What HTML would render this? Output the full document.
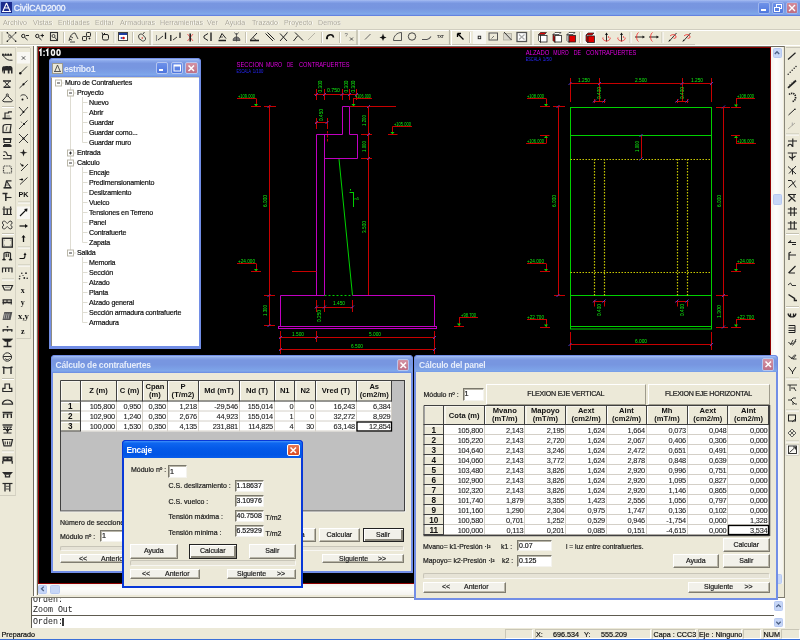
<!DOCTYPE html>
<html><head><meta charset="utf-8"><style>
*{box-sizing:border-box}
html,body{margin:0;padding:0}
body{width:800px;height:640px;overflow:hidden;position:relative;background:#ECE9D8;font-family:"Liberation Sans", sans-serif;-webkit-font-smoothing:antialiased}
div{position:absolute}
.t{white-space:pre}
svg{position:absolute;overflow:visible}
.btn{background:#F2F1EA;border:1px solid;border-color:#FFFFFF #7F7C70 #7F7C70 #FFFFFF;box-shadow:inset -1px -1px 0 #B9B6A8}
.def{border:1px solid #222;box-shadow:inset 1px 1px 0 #fff,inset -2px -2px 0 #8A877B}
.inp{background:#fff;border:1px solid;border-color:#7A786C #F4F3EE #F4F3EE #7A786C;box-shadow:inset 1px 1px 0 #B8B5A8}
.prog{background:#E6E3D6;border:1px solid;border-color:#C8C5B8 #F7F6F2 #F7F6F2 #C8C5B8;border-radius:2px}
</style></head><body>
<div style="left:0;top:0;width:800px;height:640px;overflow:hidden;will-change:transform">

<div style="left:0px;top:0px;width:800px;height:16px;background:linear-gradient(#A8BEF2 0%,#8AA6EA 10%,#7896E0 22%,#7795E0 50%,#7BA0E6 75%,#80A8EA 88%,#6A88E0 100%)"></div>
<div style="left:0px;top:15px;width:800px;height:1px;background:#6382E0"></div>
<svg style="left:1px;top:2px" width="11" height="11" viewBox="0 0 11 11"><rect width="11" height="11" fill="#1B2A8C"/><path d="M5.5 1 L2 9 M5.5 1 L9 9 M3.5 6 H7.5 M1 9.5 H10" stroke="#fff" stroke-width="1.1" fill="none"/></svg>
<div class="t" style="left:13.8px;top:3.3000000000000007px;height:10px;line-height:10px;font-size:8.6px;color:#EEF2FC;font-weight:normal;letter-spacing:-0.15px;-webkit-text-stroke:0.3px #EEF2FC">CivilCAD2000</div>
<div style="left:758px;top:2px;width:12px;height:12px;border-radius:2px;border:1px solid #9FB6EE;background:linear-gradient(#6F92E8,#4F78DE)"></div>
<div style="left:772px;top:2px;width:12px;height:12px;border-radius:2px;border:1px solid #9FB6EE;background:linear-gradient(#6F92E8,#4F78DE)"></div>
<div style="left:786px;top:2px;width:12px;height:12px;border-radius:2px;border:1px solid #9FB6EE;background:linear-gradient(#D48A9A,#BF6F82)"></div>
<div style="left:761px;top:9px;width:5px;height:2px;background:#fff"></div>
<svg style="left:773px;top:3px" width="10" height="10"><rect x="3.5" y="1.5" width="5" height="4" fill="none" stroke="#fff" stroke-width="1"/><rect x="1.5" y="4.5" width="5" height="4" fill="#5A80E0" stroke="#fff" stroke-width="1"/></svg>
<svg style="left:787px;top:3px" width="10" height="10"><path d="M2 2 L8 8 M8 2 L2 8" stroke="#fff" stroke-width="1.4"/></svg>
<div style="left:0px;top:16px;width:800px;height:13px;background:#ECE9D8"></div>
<div class="t" style="left:3.6px;top:18.2px;height:10px;line-height:10px;font-size:7.2px;color:#FFFFFF;font-weight:normal;">Archivo</div>
<div class="t" style="left:3px;top:17.6px;height:10px;line-height:10px;font-size:7.2px;color:#ACA899;font-weight:normal;">Archivo</div>
<div class="t" style="left:33.6px;top:18.2px;height:10px;line-height:10px;font-size:7.2px;color:#FFFFFF;font-weight:normal;">Vistas</div>
<div class="t" style="left:33px;top:17.6px;height:10px;line-height:10px;font-size:7.2px;color:#ACA899;font-weight:normal;">Vistas</div>
<div class="t" style="left:58.6px;top:18.2px;height:10px;line-height:10px;font-size:7.2px;color:#FFFFFF;font-weight:normal;">Entidades</div>
<div class="t" style="left:58px;top:17.6px;height:10px;line-height:10px;font-size:7.2px;color:#ACA899;font-weight:normal;">Entidades</div>
<div class="t" style="left:95.6px;top:18.2px;height:10px;line-height:10px;font-size:7.2px;color:#FFFFFF;font-weight:normal;">Editar</div>
<div class="t" style="left:95px;top:17.6px;height:10px;line-height:10px;font-size:7.2px;color:#ACA899;font-weight:normal;">Editar</div>
<div class="t" style="left:120.6px;top:18.2px;height:10px;line-height:10px;font-size:7.2px;color:#FFFFFF;font-weight:normal;">Armaduras</div>
<div class="t" style="left:120px;top:17.6px;height:10px;line-height:10px;font-size:7.2px;color:#ACA899;font-weight:normal;">Armaduras</div>
<div class="t" style="left:160.6px;top:18.2px;height:10px;line-height:10px;font-size:7.2px;color:#FFFFFF;font-weight:normal;">Herramientas</div>
<div class="t" style="left:160px;top:17.6px;height:10px;line-height:10px;font-size:7.2px;color:#ACA899;font-weight:normal;">Herramientas</div>
<div class="t" style="left:207.6px;top:18.2px;height:10px;line-height:10px;font-size:7.2px;color:#FFFFFF;font-weight:normal;">Ver</div>
<div class="t" style="left:207px;top:17.6px;height:10px;line-height:10px;font-size:7.2px;color:#ACA899;font-weight:normal;">Ver</div>
<div class="t" style="left:225.6px;top:18.2px;height:10px;line-height:10px;font-size:7.2px;color:#FFFFFF;font-weight:normal;">Ayuda</div>
<div class="t" style="left:225px;top:17.6px;height:10px;line-height:10px;font-size:7.2px;color:#ACA899;font-weight:normal;">Ayuda</div>
<div class="t" style="left:252.6px;top:18.2px;height:10px;line-height:10px;font-size:7.2px;color:#FFFFFF;font-weight:normal;">Trazado</div>
<div class="t" style="left:252px;top:17.6px;height:10px;line-height:10px;font-size:7.2px;color:#ACA899;font-weight:normal;">Trazado</div>
<div class="t" style="left:284.6px;top:18.2px;height:10px;line-height:10px;font-size:7.2px;color:#FFFFFF;font-weight:normal;">Proyecto</div>
<div class="t" style="left:284px;top:17.6px;height:10px;line-height:10px;font-size:7.2px;color:#ACA899;font-weight:normal;">Proyecto</div>
<div class="t" style="left:318.6px;top:18.2px;height:10px;line-height:10px;font-size:7.2px;color:#FFFFFF;font-weight:normal;">Demos</div>
<div class="t" style="left:318px;top:17.6px;height:10px;line-height:10px;font-size:7.2px;color:#ACA899;font-weight:normal;">Demos</div>
<div style="left:0px;top:29px;width:800px;height:1px;background:#D0CDBF"></div>
<div style="left:0px;top:30px;width:800px;height:1px;background:#FFFFFF"></div>
<div style="left:0px;top:31px;width:695px;height:14px;background:#ECE9D8"></div>
<div style="left:0px;top:44px;width:695px;height:1px;background:#C9C6B8"></div>
<div style="left:0px;top:45px;width:800px;height:1px;background:#FFFFFF"></div>
<svg style="left:0;top:0" width="800" height="50"><path d="M2 32 V44" stroke="#B8B5A6" stroke-width="1"/><path d="M63.5 32 V43" stroke="#C5C2B2" stroke-width="1"/><path d="M64.5 32 V43" stroke="#FFF" stroke-width="1"/><path d="M95.5 32 V43" stroke="#C5C2B2" stroke-width="1"/><path d="M96.5 32 V43" stroke="#FFF" stroke-width="1"/><path d="M114 32 V43" stroke="#C5C2B2" stroke-width="1"/><path d="M115 32 V43" stroke="#FFF" stroke-width="1"/><path d="M132.5 32 V43" stroke="#C5C2B2" stroke-width="1"/><path d="M133.5 32 V43" stroke="#FFF" stroke-width="1"/><path d="M198.5 32 V43" stroke="#C5C2B2" stroke-width="1"/><path d="M199.5 32 V43" stroke="#FFF" stroke-width="1"/><path d="M245.5 32 V43" stroke="#C5C2B2" stroke-width="1"/><path d="M246.5 32 V43" stroke="#FFF" stroke-width="1"/><path d="M321.5 32 V43" stroke="#C5C2B2" stroke-width="1"/><path d="M322.5 32 V43" stroke="#FFF" stroke-width="1"/><path d="M339.5 32 V43" stroke="#C5C2B2" stroke-width="1"/><path d="M340.5 32 V43" stroke="#FFF" stroke-width="1"/><path d="M469.5 32 V43" stroke="#C5C2B2" stroke-width="1"/><path d="M470.5 32 V43" stroke="#FFF" stroke-width="1"/><path d="M579.5 32 V43" stroke="#C5C2B2" stroke-width="1"/><path d="M580.5 32 V43" stroke="#FFF" stroke-width="1"/><path d="M630 32 V43" stroke="#C5C2B2" stroke-width="1"/><path d="M631 32 V43" stroke="#FFF" stroke-width="1"/><path d="M662 32 V43" stroke="#C5C2B2" stroke-width="1"/><path d="M663 32 V43" stroke="#FFF" stroke-width="1"/><path d="M150 30 V45" stroke="#B8B5A6" stroke-width="1.2"/><path d="M152 30 V45" stroke="#FFF" stroke-width="1"/><path d="M357 30 V45" stroke="#B8B5A6" stroke-width="1.2"/><path d="M359 30 V45" stroke="#FFF" stroke-width="1"/><path d="M449.5 30 V45" stroke="#B8B5A6" stroke-width="1.2"/><path d="M451.5 30 V45" stroke="#FFF" stroke-width="1"/><path d="M531 30 V45" stroke="#B8B5A6" stroke-width="1.2"/><path d="M533 30 V45" stroke="#FFF" stroke-width="1"/><g stroke="#333" stroke-width="0.75" fill="#111"><path d="M7.5 33 L15.5 41 M15.5 33 L7.5 41" fill="none"/><circle cx="7.3" cy="32.8" r="0.8" stroke="none"/><circle cx="15.7" cy="32.8" r="0.8" stroke="none"/><circle cx="7.3" cy="41.2" r="0.8" stroke="none"/><circle cx="15.7" cy="41.2" r="0.8" stroke="none"/><circle cx="9.8" cy="36.3" r="1.3" fill="none" stroke="#555"/></g><g stroke="#222" stroke-width="1" fill="none"><circle cx="23.3" cy="36" r="1.7"/><path d="M24.6 37.3 L27.5 40 M26 35.5 H29"/></g><g stroke="#222" stroke-width="1" fill="none"><circle cx="37.3" cy="36" r="1.7"/><path d="M38.6 37.3 L41.5 40 M40.5 35.5 H44 M42.3 33.8 V37.3"/></g><g stroke="#333" fill="none"><rect x="50.5" y="32.5" width="7" height="8" stroke-width="1.1"/><circle cx="53.5" cy="36" r="1.5" stroke-width="0.9"/><path d="M54.5 37 L57 40" stroke-width="0.9"/></g><g stroke="#333" stroke-width="0.9" fill="none"><path d="M69 41 C70 36 72 33 75 33 L78 39"/><path d="M70 36 L73 38 M69 39 L72 40 M70 42 H75"/></g><g stroke="#222" stroke-width="1" fill="none"><rect x="82.5" y="36.5" width="4" height="4" rx="0.8"/><rect x="86.5" y="32.5" width="4" height="4" rx="0.8"/><circle cx="89.5" cy="38.5" r="0.5" fill="#000"/></g><g stroke="#222" stroke-width="1" fill="none"><rect x="102.5" y="34.5" width="6" height="5.5" rx="1.5"/><path d="M102 32.5 L103 35 L105 33"/></g><rect x="118.5" y="32.5" width="9" height="8" fill="#fff" stroke="#444" stroke-width="1"/><rect x="119" y="33" width="8" height="2" fill="#1E3C9E"/><circle cx="123.5" cy="38" r="1.3" fill="#D01010"/><circle cx="121.5" cy="38" r="1" fill="#3050C0"/><g stroke="#333" stroke-width="0.9" fill="none"><path d="M138.5 36 C139 34 141 33.5 142.5 34.5 L145.5 38 C146 40 144 41.5 142.5 41 L139 38.5 Z"/><path d="M143 34 L144.5 32"/></g><circle cx="142.3" cy="38" r="0.8" fill="#D03030"/><g stroke="#222" fill="none"><path d="M156.5 35 V41" stroke="#888" stroke-width="1.1"/><path d="M158 40 L163 36" stroke-width="0.9"/><path d="M165.5 32.5 V39" stroke-width="1.3"/></g><g stroke="#222" fill="none"><path d="M170.8 35 V41" stroke-width="1.3"/><path d="M173 40 L177 37" stroke-width="0.9"/><path d="M180 32.5 V38" stroke-width="1.3"/></g><path d="M187.5 34 L193 41 M193 34 L187.5 41" stroke="#F04040" stroke-width="0.8"/><path d="M190.2 33.5 V41.5" stroke="#222" stroke-width="1.6"/><g stroke="#222" fill="none"><path d="M211 32.5 V41" stroke-width="1.4"/><path d="M208 33.5 L204 36 V38 L208 40.5" stroke-width="1"/></g><g stroke="#222" fill="none"><path d="M218.5 40.5 H226" stroke-width="1.5"/><path d="M219.5 38.5 L222 33.5 L226 38.5" stroke-width="1"/><path d="M220 37 H223" stroke-width="0.7"/></g><g stroke="#444" fill="#777" stroke-width="0.8"><path d="M233 40.5 C233 38 235 37 236.5 37 C238 37 240 38 240 40.5 Z"/><path d="M236.5 33 V41.5 M234.5 32.5 L236.5 35 L238.5 32.5" fill="none"/></g><g stroke="#222" fill="none"><path d="M250 40.5 H259" stroke-width="1.6"/><path d="M250.5 40 L257 33" stroke-width="1"/><path d="M253 37.5 L256 40" stroke-width="0.7"/></g><path d="M265.5 33.5 L273 41 M267.5 32.5 L274.5 39.5" stroke="#222" stroke-width="1"/><path d="M280 33.5 L287 41 M287.5 32.5 L280 41" stroke="#222" stroke-width="1"/><path d="M286 33 L288 32" stroke="#999" stroke-width="0.6"/><path d="M295 32.5 L303 40.5 M297.5 36 L293.5 41" stroke="#222" stroke-width="1"/><path d="M308 40 L315 33" stroke="#B0ADA0" stroke-width="0.9"/><path d="M326.8 38.5 C327 34 333 33.5 333.5 37.5" stroke="#111" stroke-width="1.6" fill="none"/><circle cx="327" cy="38.3" r="1.1" fill="#111"/><text x="344.5" y="37" font-size="6" font-family="Liberation Sans" fill="#666">?</text><path d="M350 37.5 L353 40.5 M353 37.5 L350 40.5" stroke="#444" stroke-width="0.9"/><path d="M365 39.5 L370.5 34" stroke="#555" stroke-width="0.9"/><path d="M383 33.5 L384 36.5 L386.5 37.5 L384 38.5 L383 41 L382 38.5 L379.5 37.5 L382 36.5 Z" fill="#111"/><path d="M393.5 40.5 H401.5 V32.5 C397 32.5 393.5 36 393.5 40.5 Z" stroke="#444" stroke-width="0.9" fill="none"/><circle cx="412" cy="36.5" r="3.7" stroke="#333" stroke-width="0.9" fill="none"/><path d="M422 39.5 H427 C429 39.5 430 38 431 36.5" stroke="#555" stroke-width="1.1" fill="none"/><text x="437" y="38" font-size="4" font-weight="bold" font-family="Liberation Sans" fill="#333" textLength="7">TXT</text><path d="M457.5 33.5 L463.5 39.5 M457.5 33.5 V37 M457.5 33.5 H461" stroke="#000" stroke-width="1.3" fill="none"/><rect x="473" y="31" width="13" height="13" fill="#F6F5F0"/><rect x="478.2" y="36.2" width="2.5" height="2.5" fill="none" stroke="#222" stroke-width="0.9"/><rect x="489" y="33" width="8.5" height="7" fill="none" stroke="#555" stroke-width="1"/><path d="M491.5 38.5 L494 36" stroke="#555" stroke-width="0.8"/><rect x="503.5" y="33.5" width="8" height="6.5" fill="#D8D6CC" stroke="#B0ADA0" stroke-width="0.8"/><path d="M504 32 L511.5 40" stroke="#222" stroke-width="0.9"/><rect x="517" y="32.5" width="9.5" height="9" fill="#fff" stroke="#555" stroke-width="1.3"/><path d="M519 34.5 L524.5 39.5 M524.5 34.5 L519 39.5" stroke="#aaa" stroke-width="1.2"/><path d="M538.5 34.5 L540.5 32.5 H546.5 L544.5 34.5 Z" fill="#E00000" stroke="#222" stroke-width="0.7"/><path d="M538.5 34.5 V40.5 L540.5 42.5 V36.5 Z" fill="#FFFFFF" stroke="#222" stroke-width="0.7"/><rect x="540.5" y="35.5" width="6.5" height="6.5" fill="#FFFFFF" stroke="#222" stroke-width="0.8"/><path d="M553 34.5 L555 32.5 H561 L559 34.5 Z" fill="#FFFFFF" stroke="#222" stroke-width="0.7"/><path d="M553 34.5 V40.5 L555 42.5 V36.5 Z" fill="#E00000" stroke="#222" stroke-width="0.7"/><rect x="555" y="35.5" width="6.5" height="6.5" fill="#FFFFFF" stroke="#222" stroke-width="0.8"/><path d="M567 34.5 L569 32.5 H575 L573 34.5 Z" fill="#FFFFFF" stroke="#222" stroke-width="0.7"/><path d="M567 34.5 V40.5 L569 42.5 V36.5 Z" fill="#FFFFFF" stroke="#222" stroke-width="0.7"/><rect x="569" y="35.5" width="6.5" height="6.5" fill="#E00000" stroke="#222" stroke-width="0.8"/><rect x="583" y="31" width="13" height="13" fill="#F6F5F0"/><path d="M586 35 L588 33 H594 L592 35 Z" fill="#E00000" stroke="#222" stroke-width="0.7"/><path d="M586 35 V41 L588 43 V37 Z" fill="#E00000" stroke="#222" stroke-width="0.7"/><rect x="588" y="36" width="6.5" height="6.5" fill="#E00000" stroke="#222" stroke-width="0.8"/><path d="M606.5 41.5 V33.5" stroke="#111" stroke-width="0.9"/><path d="M605 35 L606.5 32.5 L608 35 Z" fill="#111"/><path d="M603 37.5 C602 39.5 605 41 606.5 41 C608 41 611 39.5 610 37.5" stroke="#F03030" stroke-width="0.9" fill="none"/><circle cx="608.5" cy="37" r="0.7" fill="#F03030"/><path d="M621.5 41.5 V33.5" stroke="#111" stroke-width="0.9"/><path d="M620 35 L621.5 32.5 L623 35 Z" fill="#111"/><path d="M618 37.5 C617 39.5 620 41 621.5 41 C623 41 626 39.5 625 37.5" stroke="#F03030" stroke-width="0.9" fill="none"/><circle cx="623.5" cy="37" r="0.7" fill="#F03030"/><path d="M635 37 H643" stroke="#111" stroke-width="0.9"/><path d="M642.5 35.5 L645 37 L642.5 38.5 Z" fill="#111"/><path d="M638.5 32.5 C636 34 636 40 638.5 41.5" stroke="#F03030" stroke-width="0.9" fill="none"/><path d="M649 37 H657" stroke="#111" stroke-width="0.9"/><path d="M656.5 35.5 L659 37 L656.5 38.5 Z" fill="#111"/><path d="M652.5 32.5 C650 34 650 40 652.5 41.5" stroke="#F03030" stroke-width="0.9" fill="none"/><path d="M669 41.5 L676.5 33" stroke="#222" stroke-width="0.9"/><path d="M668.5 41.5 L670.5 40.5 L669.5 39.5 Z" fill="#111"/><path d="M670 36 C672 34 676 34 676 37 C676 38.5 674 38.5 673.5 38" stroke="#F03030" stroke-width="0.9" fill="none"/><path d="M683 41.5 L690.5 33" stroke="#222" stroke-width="0.9"/><path d="M682.5 41.5 L684.5 40.5 L683.5 39.5 Z" fill="#111"/><path d="M684 36 C686 34 690 34 690 37 C690 38.5 688 38.5 687.5 38" stroke="#F03030" stroke-width="0.9" fill="none"/></svg>
<svg style="left:0;top:0" width="36" height="500"><path d="M0 47.5 H15" stroke="#C9C6B8"/><path d="M17 47.5 H30" stroke="#C9C6B8"/><path d="M15.5 47 V496" stroke="#D6D3C4" stroke-width="1"/><path d="M0 495.5 H15.5" stroke="#D0CDBE"/><path d="M30.5 48 V339" stroke="#D6D3C4"/><path d="M16.5 338.5 H30.5" stroke="#D0CDBE"/><path d="M2 106.5 H14" stroke="#C5C2B2"/><path d="M2 107.5 H14" stroke="#FFF"/><path d="M2 233.5 H14" stroke="#C5C2B2"/><path d="M2 234.5 H14" stroke="#FFF"/><path d="M2 279 H14" stroke="#C5C2B2"/><path d="M2 280 H14" stroke="#FFF"/><path d="M2 378.5 H14" stroke="#C5C2B2"/><path d="M2 379.5 H14" stroke="#FFF"/><path d="M2 451 H14" stroke="#C5C2B2"/><path d="M2 452 H14" stroke="#FFF"/><path d="M18 202 H30" stroke="#C5C2B2"/><path d="M18 203 H30" stroke="#FFF"/><path d="M18 247 H30" stroke="#C5C2B2"/><path d="M18 248 H30" stroke="#FFF"/><path d="M18 265 H30" stroke="#C5C2B2"/><path d="M18 266 H30" stroke="#FFF"/><g fill="#222"><circle cx="3" cy="54.6" r="1"/><circle cx="5.6" cy="54.6" r="1"/><circle cx="8.2" cy="54.6" r="1"/><circle cx="10.8" cy="54.6" r="1"/></g><path d="M2 55.2 H12 M3 55.5 C5 58 7 60 9.5 60.2 H12.5" stroke="#2A2A2A" fill="none" stroke-width="1"/><path d="M2 73.5 V68.5 C2 66.5 3.5 66 5 66.3 C6 65.8 7.5 65.8 8.5 66.3 C9.5 65.8 12.5 66 12.5 68.5 V73.5 H11 V70.5 H9.5 V73.5 H7.8 V70.5 H5 V73.5 H3.5 V70.5 H3 Z" fill="#2A2A2A"/><path d="M3 81 H11 M3.5 87.3 H10.5" stroke="#2A2A2A" fill="none" stroke-width="1.6"/><path d="M4.5 81.5 L7 84.5 L9.5 81.5 M4.5 87 L7 84 L9.5 87" stroke="#2A2A2A" fill="none" stroke-width="1"/><circle cx="7.3" cy="95" r="1.1" stroke="#2A2A2A" fill="none" stroke-width="0.9"/><path d="M6.5 96 L2.5 100.8 L4 101.8 H11.5 L12.5 100.8 L8 96" stroke="#2A2A2A" fill="none" stroke-width="1"/><path d="M2.5 118.5 H11.5" stroke="#2A2A2A" fill="none" stroke-width="1.6"/><path d="M5 118 V113 H8.5 V111.5 M8.5 111.8 H12" stroke="#2A2A2A" fill="none" stroke-width="1.2"/><path d="M6.5 116 H10" stroke="#777" stroke-width="0.8"/><path d="M3 132.5 V127 C3 125 4 124.5 6 124.5 H11 L10 132.5" stroke="#2A2A2A" fill="none" stroke-width="1.2"/><path d="M2.5 132.5 H11.5" stroke="#2A2A2A" fill="none" stroke-width="1.3"/><path d="M7 126.5 L6 131" stroke="#555" stroke-width="0.9"/><path d="M3 139 H11.5 M3 146 H11.5" stroke="#2A2A2A" fill="none" stroke-width="1.8"/><path d="M4 140 V142.5 H10.5 V140 M4 144.5 H10.5" stroke="#2A2A2A" fill="none" stroke-width="1.2"/><path d="M3.5 152 C5 151.5 6.5 152 7 154 L7.5 155.5 H11 V158.5 M3 158.8 H11.5 M3 155.5 L5 155.5" stroke="#2A2A2A" fill="none" stroke-width="1.1"/><path d="M4 166 H10 L11.5 167.5 V172.5 M3.5 166.5 V173 H11.5" stroke="#3A3A3A" fill="none" stroke-width="1.2" stroke-dasharray="1 0.7"/><path d="M3.5 187.8 H11.5" stroke="#2A2A2A" fill="none" stroke-width="1.6"/><path d="M5 187 L6.5 180.8 H11.5 M6.5 181 L10.5 187" stroke="#2A2A2A" fill="none" stroke-width="1.2"/><path d="M6 185 H9" stroke="#666" stroke-width="0.9"/><path d="M2.5 193.5 H7.5 M5.8 193.5 V201" stroke="#2A2A2A" fill="none" stroke-width="1.5"/><path d="M5.8 197.5 H11.5" stroke="#2A2A2A" fill="none" stroke-width="1.1"/><path d="M2.5 209 H12 M3 214.5 H12" stroke="#2A2A2A" fill="none" stroke-width="1.2"/><path d="M4 209 V214.5 M7.3 209 V214.5 M10.6 209 V214.5 M4 206.5 V208.5 M10.6 206.5 V208.5" stroke="#2A2A2A" fill="none" stroke-width="1.3"/><path d="M3.5 221 C5 221 6 222 7.3 223.5 C8.5 222 9.5 221 11 221 C12.5 222 12.5 224 10.5 225 C12.5 226 12.5 228 11 229 C9.5 229 8.5 228 7.3 226.5 C6 228 5 229 3.5 229 C2 228 2 226 4 225 C2 224 2 222 3.5 221 Z" stroke="#2A2A2A" fill="none" stroke-width="0.9"/><rect x="2.5" y="238.3" width="9.8" height="8.8" stroke="#2A2A2A" fill="none" stroke-width="1.4"/><g fill="#999"><circle cx="4.4" cy="240.2" r="0.6"/><circle cx="10.4" cy="240.2" r="0.6"/><circle cx="4.4" cy="245.2" r="0.6"/><circle cx="10.4" cy="245.2" r="0.6"/></g><path d="M4 259.5 V253.5 C4 252 10.5 252 10.5 253.5 V259.5 M6.2 253.5 V257 M8.3 253.5 V257" stroke="#2A2A2A" fill="none" stroke-width="1.2"/><path d="M2.5 260 C2.5 258.5 5.5 258.5 5.5 260 Z M9 260 C9 258.5 12 258.5 12 260 Z" fill="#222" stroke="#222" stroke-width="0.8"/><path d="M2.5 272.5 V268 H12 V272.5 M5.6 268 V272 M8.8 268 V272" stroke="#2A2A2A" fill="none" stroke-width="1.2"/><path d="M2.5 285.5 H12.5 L10.5 290 H4.5 Z" stroke="#2A2A2A" fill="none" stroke-width="1.2"/><path d="M5 287.2 H10" stroke="#888" stroke-width="1"/><path d="M2.5 299.8 H12 M2.5 302.5 H12" stroke="#2A2A2A" fill="none" stroke-width="1.3"/><path d="M3.3 300 V304.5 M7 300 V302.5 M11.2 300 V304.5 M5 302.5 V303.5 M9 302.5 V303.5" stroke="#2A2A2A" fill="none" stroke-width="1.1"/><path d="M4.3 312 H12.3 L10.5 320 H2.5 Z" fill="#555"/><path d="M5.2 313.5 L4.1 318.8 M7.2 313.5 L6.1 318.8 M9.2 313.5 L8.1 318.8" stroke="#CCC" stroke-width="0.7"/><circle cx="7.5" cy="326.8" r="0.9" fill="#222"/><path d="M2.5 329.8 H12.5" stroke="#2A2A2A" fill="none" stroke-width="1.4"/><path d="M3.2 330 V331.8 M7.5 330 V331.5 M11.8 330 V331.8" stroke="#2A2A2A" fill="none" stroke-width="1.2"/><path d="M2.5 339 H12.5 L10 341.3 H5 Z" fill="#222" stroke="#222" stroke-width="0.8"/><path d="M7.5 341 V346 M3.5 346.5 H11.5" stroke="#2A2A2A" fill="none" stroke-width="1.5"/><circle cx="7.3" cy="357" r="4.2" stroke="#2A2A2A" fill="none" stroke-width="1"/><path d="M3.2 356.5 H11.4" stroke="#2A2A2A" fill="none" stroke-width="1"/><path d="M5 358.5 C6 360 8.6 360 9.6 358.5" stroke="#2A2A2A" fill="none" stroke-width="0.9"/><path d="M2.5 367 C5 368 10 368 12.5 367" stroke="#2A2A2A" fill="none" stroke-width="1.5"/><path d="M3.8 367.5 V374 M11 367.5 V374" stroke="#2A2A2A" fill="none" stroke-width="1.3"/><path d="M5 384 H9.5 V388.3 H11.8 V391.5 H2.8 V388.3 H5 Z" stroke="#2A2A2A" fill="none" stroke-width="1.2"/><path d="M2.5 404.2 H12.5 V403 C10.5 399 4.5 399 2.5 403 Z" stroke="#2A2A2A" fill="none" stroke-width="1.2"/><path d="M2.5 412.5 H12.5" stroke="#2A2A2A" fill="none" stroke-width="1.5"/><path d="M3 414 H12" stroke="#2A2A2A" fill="none" stroke-width="0.9"/><path d="M3.6 414 V418 M7.5 414 V418 M11.3 414 V418" stroke="#2A2A2A" fill="none" stroke-width="1.4"/><path d="M2.5 425 H12.5" stroke="#2A2A2A" fill="none" stroke-width="1.4"/><path d="M3 427 H12 M3.5 433 H11.5 M4 427 L7.5 432 L11 427 M7.5 427 V433 M3 429.5 H12" stroke="#2A2A2A" fill="none" stroke-width="1"/><path d="M2.5 439.5 H12.5 L11 445.8 H4 Z" stroke="#2A2A2A" fill="none" stroke-width="1.2"/><path d="M5.2 441.5 V444.5 M7.5 441.5 V444.5 M9.8 441.5 V444.5" stroke="#2A2A2A" fill="none" stroke-width="1"/><rect x="2.5" y="456.5" width="10" height="4.8" fill="#2A2A2A"/><path d="M2.8 461 V463.8 M12.2 461 V463.8" stroke="#2A2A2A" fill="none" stroke-width="1.3"/><path d="M4.3 458.8 H6.5 M8.5 458.8 H10.7" stroke="#ECE9D8" stroke-width="1.1"/><path d="M2 472 H13 L10.5 474.8 H4.5 Z" fill="#2A2A2A"/><path d="M5.5 474.5 V476.8 H9.5 V474.5" stroke="#2A2A2A" fill="none" stroke-width="1.3"/><path d="M2.5 483.5 H12.5" stroke="#2A2A2A" fill="none" stroke-width="1.2"/><path d="M5 484 V491.5 M9.8 484 V491.5" stroke="#2A2A2A" fill="none" stroke-width="1.3"/><path d="M5.5 486.3 H9.3 M5.5 489 H9.3" stroke="#444" stroke-width="0.9"/><rect x="17" y="52" width="13" height="11.5" fill="#F8F7F3"/><rect x="17" y="206.5" width="13" height="12.5" fill="#F8F7F3"/><path d="M21.8 56.3 L25.2 59.7 M25.2 56.3 L21.8 59.7" stroke="#333" stroke-width="0.8"/><path d="M20 73.5 L27 66.5" stroke="#222" stroke-width="0.9"/><circle cx="20.3" cy="73.3" r="1.2" fill="#111"/><path d="M19.5 88 L27.5 80.5" stroke="#222" stroke-width="0.9"/><circle cx="23.5" cy="84.3" r="1.1" fill="#111"/><path d="M20.5 96 C22 94 27 94 27.5 99" stroke="#222" stroke-width="0.9" fill="none"/><circle cx="22.5" cy="99.5" r="1" fill="#111"/><path d="M19 107 L23.5 112 L28 107 M23.5 112 L20 116" stroke="#222" stroke-width="0.9" fill="none"/><circle cx="23.5" cy="112" r="1" fill="#111"/><path d="M19 129 L27.5 120.5" stroke="#222" stroke-width="0.9"/><circle cx="24" cy="124" r="1.1" fill="#111"/><path d="M21 121.5 L22 123" stroke="#444" stroke-width="0.6"/><path d="M19 134 L28 143 M28 134 L19 143" stroke="#222" stroke-width="0.9"/><circle cx="23.5" cy="138.5" r="1" fill="#111"/><path d="M23.5 149 L24.5 152 L27.5 152.5 L24.5 153.5 L23.5 156.5 L22.5 153.5 L19.5 152.5 L22.5 152 Z" fill="#222"/><path d="M20 163.5 L23 166 M21 171 L28 164" stroke="#222" stroke-width="0.9"/><circle cx="22.5" cy="165.5" r="1.1" fill="#111"/><path d="M19.5 179.5 H22 M20 184.5 L27.5 177.5" stroke="#222" stroke-width="0.9"/><circle cx="22" cy="179.5" r="1.1" fill="#111"/><text x="18.5" y="197.3" font-size="6.3" font-weight="bold" font-family="Liberation Sans" fill="#111" textLength="10" lengthAdjust="spacingAndGlyphs">PK</text><path d="M20 216 L26.5 209.5" stroke="#111" stroke-width="1.1"/><path d="M27.5 208.5 L24 209 L27 212 Z" fill="#111"/><path d="M19.5 226 H26" stroke="#111" stroke-width="1.2"/><path d="M25 224 L28 226 L25 228 Z" fill="#111"/><path d="M23.5 242 V237" stroke="#111" stroke-width="1.3"/><path d="M21.5 237.5 L23.5 235 L25.5 237.5 Z" fill="#111"/><path d="M19.5 258.5 H23.5 C25 258.5 25 257 25 255" stroke="#111" stroke-width="1.1" fill="none"/><path d="M23.5 255 L25 252.5 L26.5 255 Z" fill="#111"/><g fill="#222"><circle cx="19.5" cy="278.8" r="0.8"/><circle cx="19.8" cy="276.3" r="0.7"/><circle cx="21.8" cy="273.2" r="0.8"/><circle cx="26" cy="273.2" r="0.9"/><circle cx="24.3" cy="278" r="0.9"/><circle cx="27.2" cy="278.2" r="0.8"/><circle cx="23" cy="275.5" r="0.6"/></g><text x="20.8" y="292.8" font-size="8" font-weight="bold" font-family="Liberation Serif" fill="#111">x</text><text x="20.8" y="304.8" font-size="8" font-weight="bold" font-family="Liberation Serif" fill="#111">y</text><text x="18" y="319" font-size="7.5" font-weight="bold" font-family="Liberation Serif" fill="#111" textLength="11" lengthAdjust="spacingAndGlyphs">x,y</text><text x="21" y="333.5" font-size="8" font-weight="bold" font-family="Liberation Serif" fill="#111">z</text></svg>
<div style="left:33px;top:46px;width:1px;height:550px;background:#6F6C60"></div>
<div style="left:34px;top:46px;width:2px;height:550px;background:#FFFFFF"></div>
<div style="left:37px;top:46px;width:748px;height:551px;background:#ECE9D8"></div>
<div style="left:37px;top:46px;width:1px;height:549px;background:#6F6C60"></div>
<div style="left:37px;top:46px;width:747px;height:1px;background:#6F6C60"></div>
<div style="left:784px;top:46px;width:1px;height:551px;background:#8A877A"></div>
<div style="left:38px;top:47px;width:733px;height:537px;background:#000;border:1px solid #8E0000;border-right-width:1px"></div>
<svg style="left:0;top:0" width="70" height="60"><g stroke="#F4F4F4" fill="none" stroke-width="1.5"><path d="M39.2 50.8 L40.9 49.4 V55.9 M46 50.8 L47.7 49.4 V55.9"/><ellipse cx="53" cy="52.6" rx="1.55" ry="2.75"/><ellipse cx="58.5" cy="52.6" rx="1.55" ry="2.75"/></g><rect x="43.3" y="50.6" width="1.5" height="1.5" fill="#F4F4F4"/><rect x="43.3" y="54.4" width="1.5" height="1.5" fill="#F4F4F4"/></svg>
<div style="left:771px;top:47px;width:12px;height:537px;background:linear-gradient(90deg,#F4F3EE,#FDFDFB 40%,#F4F3EE)"></div>
<div style="left:772.5px;top:48px;width:9px;height:9.5px;border-radius:1.5px;background:#C6D6F7;border:1px solid #B7C9F2"></div>
<svg style="left:772px;top:48px" width="10" height="10"><path d="M2.8 6 L5 3.7 L7.2 6" stroke="#4D6185" stroke-width="1.3" fill="none"/></svg>
<div style="left:772.5px;top:194px;width:9px;height:10.5px;border-radius:1.5px;background:#C6D6F7;border:1px solid #B7C9F2"></div>
<div style="left:772.5px;top:574px;width:9px;height:9.5px;border-radius:1.5px;background:#C6D6F7;border:1px solid #B7C9F2"></div>
<div style="left:38px;top:584px;width:734px;height:11px;background:linear-gradient(#F4F3EE,#FDFDFB 40%,#F4F3EE)"></div>
<div style="left:38px;top:584.5px;width:9px;height:9px;border-radius:1.5px;background:#C6D6F7;border:1px solid #B7C9F2"></div>
<svg style="left:38px;top:584px" width="10" height="10"><path d="M5.8 2.6 L3.5 4.8 L5.8 7" stroke="#4D6185" stroke-width="1.3" fill="none"/></svg>
<div style="left:50px;top:584.5px;width:9.5px;height:9px;border-radius:1.5px;background:#C6D6F7;border:1px solid #B7C9F2"></div>
<div style="left:38px;top:594.5px;width:746px;height:2.5px;background:#ECE9D8"></div>
<div style="left:31px;top:597px;width:754px;height:1px;background:#7B786C"></div>
<svg style="left:0;top:0" width="800" height="470"><path d="M786 47.5 H800" stroke="#C9C6B8"/><path d="M786 134 H799" stroke="#C5C2B2"/><path d="M786 135 H799" stroke="#FFF"/><path d="M786 233.5 H799" stroke="#C5C2B2"/><path d="M786 234.5 H799" stroke="#FFF"/><path d="M786 306.5 H799" stroke="#C5C2B2"/><path d="M786 307.5 H799" stroke="#FFF"/><path d="M786 378 H799" stroke="#C5C2B2"/><path d="M786 379 H799" stroke="#FFF"/><path d="M786 410 H799" stroke="#C5C2B2"/><path d="M786 411 H799" stroke="#FFF"/><path d="M786 441 H799" stroke="#C5C2B2"/><path d="M786 442 H799" stroke="#FFF"/><path d="M788 59.5 L795.5 52.8" stroke="#222" fill="none" stroke-width="1.2"/><g fill="#222"><circle cx="788.2" cy="74.3" r="0.75"/><circle cx="790.2" cy="72.3" r="0.75"/><circle cx="792.2" cy="70.3" r="0.75"/><circle cx="794.2" cy="68.3" r="0.75"/><circle cx="796" cy="66.5" r="0.75"/></g><path d="M788 87.8 L796 80.5" stroke="#222" fill="none" stroke-width="1.8"/><path d="M789.5 84.5 L790.2 85.3 M791.5 82.7 L792.2 83.5 M793.5 80.9 L794.2 81.7" stroke="#222" stroke-width="0.9"/><path d="M789 94.5 C791 92.5 795 93 795.5 96.5 C796 99 794.5 101 792.5 101.5" stroke="#222" fill="none" stroke-width="1.6" stroke-dasharray="1.4 0.8"/><path d="M788.5 115 L795 109" stroke="#222" fill="none" stroke-width="1"/><circle cx="795" cy="109.2" r="0.8" fill="#222"/><path d="M788 129 L795 123" stroke="#A8A598" fill="none" stroke-width="0.9"/><path d="M792.3 122.5 V125.5" stroke="#999" stroke-width="0.8"/><path d="M792.8 138.5 V147 M788 141 H797 M788 146.5 C788 143.5 792 143.5 792 146.5" stroke="#222" fill="none" stroke-width="1.1"/><path d="M787.8 153 H797 M792.3 153 V160.5 M789 156.5 L792 158.5 M795.5 156 L792.5 158" stroke="#222" fill="none" stroke-width="1.1"/><path d="M788 166.5 L796 174 M796 166 L789 173.5 M792.5 168.5 V174.5" stroke="#222" fill="none" stroke-width="1"/><path d="M788 180.5 H791.5 L796 187.5 M788.5 187.5 L795.5 181" stroke="#222" fill="none" stroke-width="1"/><path d="M788 194.5 H796 M788 194.5 L795.5 201.5 M788.5 201.5 L792.5 197.5 M794 195 V198" stroke="#222" fill="none" stroke-width="1.1"/><path d="M787.8 209 H797 M787.8 213 H797 M790.8 207 V216 M794.3 207 V216" stroke="#222" fill="none" stroke-width="1.1"/><path d="M787.8 223 H797 M787.8 229 H797 M790.8 221 V229 M794.3 221 V229" stroke="#222" fill="none" stroke-width="1.1"/><path d="M788 242.5 H796 M789 242.5 L791 240.5 M792 244.5 H796" stroke="#222" fill="none" stroke-width="1.1"/><path d="M789 260 V253 L791 252 M789 255 H796" stroke="#222" fill="none" stroke-width="1.2"/><path d="M788.5 273 L795.5 266 M789 273 H795" stroke="#222" fill="none" stroke-width="1.2"/><path d="M788 285 L790.5 283 L792 285.5 H796" stroke="#222" fill="none" stroke-width="0.9"/><path d="M788.5 294.5 L794.5 298.5 V300.5 H797" stroke="#222" fill="none" stroke-width="1.5"/><path d="M788 313.5 C789 318 795 318 796 313.5 M790.5 313.5 V316.5 M793.5 313.5 V316.5" stroke="#222" fill="none" stroke-width="1.3"/><path d="M788.5 325.5 H795 V332.5 H788.5 M788.5 328 H795 M788.5 330.5 H795" stroke="#222" fill="none" stroke-width="1"/><path d="M788.5 342 C790 345 794 345 796 339 M790.5 345 L793 340 M792.5 345.5 L796 341" stroke="#222" fill="none" stroke-width="0.9"/><path d="M788.5 356 L793 359 L796 355 M791 359 L795 354.5 M793 359 H796.5" stroke="#222" fill="none" stroke-width="0.9"/><path d="M788.5 367 L792.5 372 L796 367 M792.5 372 V374" stroke="#222" fill="none" stroke-width="1"/><path d="M787.5 385 H797 M790 385 V391 M794 388 L796 391 M791 388 H795" stroke="#222" fill="none" stroke-width="0.9"/><path d="M788 400 H791 L793 398 L796 398 M791 400 L795 404 H797 M793 402 V405" stroke="#222" fill="none" stroke-width="0.9"/><rect x="788.5" y="415" width="7" height="6" stroke="#222" fill="none" stroke-width="1"/><path d="M792 422 L796 418.5" stroke="#222" stroke-width="0.9"/><path d="M792 429 L796 433 L792 437 L788 433 Z M790 431 L794 435 M794 431 L790 435" stroke="#555" fill="none" stroke-width="0.9"/><rect x="786" y="444.5" width="13" height="11" fill="#F8F7F3" stroke="#C5C2B2" stroke-width="0.6"/><rect x="788.5" y="446" width="8" height="7.5" stroke="#222" fill="none" stroke-width="0.9"/><path d="M789.5 452.5 L795.5 447 M793 447 H795.5 V449.5" stroke="#222" fill="none" stroke-width="0.9"/></svg>
<div style="left:31px;top:598px;width:754px;height:30px;background:#FFFFFF"></div>
<div style="left:31px;top:598px;width:1px;height:30px;background:#5E5B50"></div>
<div style="left:32px;top:615px;width:742px;height:1px;background:#5E5B50"></div>
<div style="left:32px;top:598px;width:742px;height:17px;overflow:hidden"><div class="t" style="left:1px;top:-2.5px;font:8.3px/8px 'Liberation Mono',monospace;color:#222">Orden:</div><div class="t" style="left:1px;top:7.5px;font:8.3px/8px 'Liberation Mono',monospace;color:#222">Zoom Out</div></div>
<div class="t" style="left:33px;top:618px;font:8.3px/8px 'Liberation Mono',monospace;color:#222">Orden:</div>
<div style="left:62px;top:618px;width:2px;height:7.5px;background:#3A3A3A"></div>
<div style="left:774px;top:601px;width:9px;height:9.5px;border-radius:1.5px;background:#C6D6F7;border:1px solid #B7C9F2"></div>
<svg style="left:774px;top:601px" width="10" height="10"><path d="M2.3 6 L4.5 3.8 L6.7 6" stroke="#4D6185" stroke-width="1.3" fill="none"/></svg>
<div style="left:774px;top:617.5px;width:9px;height:9.5px;border-radius:1.5px;background:#C6D6F7;border:1px solid #B7C9F2"></div>
<svg style="left:774px;top:617.5px" width="10" height="10"><path d="M2.3 3.8 L4.5 6 L6.7 3.8" stroke="#4D6185" stroke-width="1.3" fill="none"/></svg>
<div style="left:0px;top:628px;width:800px;height:11px;background:#ECE9D8"></div>
<div style="left:0px;top:639px;width:800px;height:1px;background:#3A6FD8"></div>
<div class="t" style="left:1.5px;top:629.8px;height:10px;line-height:10px;font-size:7.2px;color:#111;font-weight:normal;-webkit-text-stroke-width:0.2px;">Preparado</div>
<div style="left:505px;top:629px;width:28px;height:10px;border:1px solid;border-color:#C9C6B6 #FFFFFF #FFFFFF #C9C6B6"></div>
<div style="left:535px;top:629px;width:115.5px;height:10px;border:1px solid;border-color:#C9C6B6 #FFFFFF #FFFFFF #C9C6B6"></div>
<div style="left:652px;top:629px;width:44px;height:10px;border:1px solid;border-color:#C9C6B6 #FFFFFF #FFFFFF #C9C6B6"></div>
<div style="left:698px;top:629px;width:43.5px;height:10px;border:1px solid;border-color:#C9C6B6 #FFFFFF #FFFFFF #C9C6B6"></div>
<div style="left:743px;top:629px;width:18px;height:10px;border:1px solid;border-color:#C9C6B6 #FFFFFF #FFFFFF #C9C6B6"></div>
<div style="left:762.5px;top:629px;width:16.5px;height:10px;border:1px solid;border-color:#C9C6B6 #FFFFFF #FFFFFF #C9C6B6"></div>
<div style="left:780.5px;top:629px;width:19.5px;height:10px;border:1px solid;border-color:#C9C6B6 #FFFFFF #FFFFFF #C9C6B6"></div>
<div class="t" style="left:536px;top:629.5px;height:10px;line-height:10px;font-size:7.2px;color:#111;font-weight:normal;-webkit-text-stroke-width:0.2px;">X:</div>
<div class="t" style="left:553px;top:629.5px;height:10px;line-height:10px;font-size:7.2px;color:#111;font-weight:normal;-webkit-text-stroke-width:0.2px;">696.534</div>
<div class="t" style="left:584px;top:629.5px;height:10px;line-height:10px;font-size:7.2px;color:#111;font-weight:normal;-webkit-text-stroke-width:0.2px;">Y:</div>
<div class="t" style="left:601px;top:629.5px;height:10px;line-height:10px;font-size:7.2px;color:#111;font-weight:normal;-webkit-text-stroke-width:0.2px;">555.209</div>
<div class="t" style="left:653.5px;top:629.5px;height:10px;line-height:10px;font-size:7.2px;color:#111;font-weight:normal;-webkit-text-stroke-width:0.2px;">Capa : CCC3</div>
<div class="t" style="left:699px;top:629.5px;height:10px;line-height:10px;font-size:7.2px;color:#111;font-weight:normal;-webkit-text-stroke-width:0.2px;">Eje : Ninguno</div>
<div class="t" style="left:763.5px;top:629.5px;height:10px;line-height:10px;font-size:7.2px;color:#111;font-weight:normal;-webkit-text-stroke-width:0.2px;">NUM</div>
<svg style="left:0;top:0" width="800" height="640" font-family="Liberation Sans"><text x="236.5" y="67.3" font-size="6.94" fill="#E000E0" textLength="26.80000000000001" lengthAdjust="spacingAndGlyphs">SECCION</text><text x="266" y="67.3" font-size="6.94" fill="#E000E0" textLength="16" lengthAdjust="spacingAndGlyphs">MURO</text><text x="287" y="67.3" font-size="6.94" fill="#E000E0" textLength="6.399999999999977" lengthAdjust="spacingAndGlyphs">DE</text><text x="299" y="67.3" font-size="6.94" fill="#E000E0" textLength="50.5" lengthAdjust="spacingAndGlyphs">CONTRAFUERTES</text><text x="236.5" y="72.6" font-size="4.44" fill="#2828FF" textLength="14.5" lengthAdjust="spacingAndGlyphs">ESCALA</text><text x="252.8" y="72.6" font-size="4.44" fill="#2828FF" textLength="10.5" lengthAdjust="spacingAndGlyphs">1/100</text><text x="238" y="97.6" font-size="4.44" fill="#10F010" textLength="17" lengthAdjust="spacingAndGlyphs">+109.000</text><path d="M237 98.5 L256 98.5" stroke="#C80000" stroke-width="1"/><path d="M256.5 98.5 L256.5 106.5" stroke="#C80000" stroke-width="1"/><path d="M254 104.0 H258 L256 106.5 Z" fill="#00D000"/><path d="M251 106.5 L261 106.5" stroke="#C80000" stroke-width="1"/><text x="238" y="262.6" font-size="4.44" fill="#10F010" textLength="17" lengthAdjust="spacingAndGlyphs">+24.000</text><path d="M237 263.5 L256 263.5" stroke="#C80000" stroke-width="1"/><path d="M256.5 263.5 L256.5 271.5" stroke="#C80000" stroke-width="1"/><path d="M254 269.0 H258 L256 271.5 Z" fill="#00D000"/><path d="M251 271.5 L261 271.5" stroke="#C80000" stroke-width="1"/><path d="M264 106.5 L276 106.5" stroke="#C80000" stroke-width="1"/><path d="M267.5 108.0 L270.5 105.0" stroke="#5040E0" stroke-width="0.9"/><path d="M269.5 105 L269.5 326" stroke="#C80000" stroke-width="1"/><text transform="translate(266.6 207) rotate(-90)" x="0" y="0" font-size="4.44" fill="#10F010" textLength="12" lengthAdjust="spacingAndGlyphs">6.000</text><path d="M264 295.5 L275 295.5" stroke="#C80000" stroke-width="1"/><path d="M267.5 297.0 L270.5 294.0" stroke="#5040E0" stroke-width="0.9"/><path d="M264 325.5 L275 325.5" stroke="#C80000" stroke-width="1"/><path d="M267.5 327.0 L270.5 324.0" stroke="#5040E0" stroke-width="0.9"/><text transform="translate(266.6 316) rotate(-90)" x="0" y="0" font-size="4.44" fill="#10F010" textLength="11" lengthAdjust="spacingAndGlyphs">1.300</text><path d="M314 94.5 L358 94.5" stroke="#C80000" stroke-width="1"/><path d="M316.5 89 L316.5 100" stroke="#C80000" stroke-width="1"/><path d="M315.0 96.0 L318.0 93.0" stroke="#5040E0" stroke-width="0.9"/><path d="M324.5 89 L324.5 100" stroke="#C80000" stroke-width="1"/><path d="M323.0 96.0 L326.0 93.0" stroke="#5040E0" stroke-width="0.9"/><path d="M342.5 89 L342.5 100" stroke="#C80000" stroke-width="1"/><path d="M340.5 96.0 L343.5 93.0" stroke="#5040E0" stroke-width="0.9"/><path d="M349.5 89 L349.5 100" stroke="#C80000" stroke-width="1"/><path d="M348.0 96.0 L351.0 93.0" stroke="#5040E0" stroke-width="0.9"/><path d="M356.5 89 L356.5 100" stroke="#C80000" stroke-width="1"/><path d="M355.0 96.0 L358.0 93.0" stroke="#5040E0" stroke-width="0.9"/><text transform="translate(322.1 92.5) rotate(-90)" x="0" y="0" font-size="4.44" fill="#10F010" textLength="12.0" lengthAdjust="spacingAndGlyphs">0.300</text><text x="327" y="92.39999999999999" font-size="4.44" fill="#10F010" textLength="13" lengthAdjust="spacingAndGlyphs">0.750</text><text transform="translate(347.6 92.5) rotate(-90)" x="0" y="0" font-size="4.44" fill="#10F010" textLength="12.0" lengthAdjust="spacingAndGlyphs">0.300</text><text transform="translate(354.6 92.5) rotate(-90)" x="0" y="0" font-size="4.44" fill="#10F010" textLength="12.0" lengthAdjust="spacingAndGlyphs">0.300</text><text x="355" y="97.89999999999999" font-size="4.44" fill="#10F010" textLength="16" lengthAdjust="spacingAndGlyphs">+106.000</text><path d="M353 98.5 L372 98.5" stroke="#C80000" stroke-width="1"/><path d="M353.5 98.5 L353.5 106.5" stroke="#C80000" stroke-width="1"/><path d="M351.5 104.0 H355.5 L353.5 106.5 Z" fill="#00D000"/><path d="M351 106.5 L356 106.5" stroke="#C80000" stroke-width="1"/><path d="M342.5 134.5 L342.5 106.5 L349.5 106.5 L349.5 134.5 L357.5 134.5 L357.5 158.5 L324.5 158.5" stroke="#C000C0" stroke-width="1" fill="none"/><path d="M316.5 295.5 L316.5 134.5 L342.5 134.5" stroke="#C000C0" stroke-width="1" fill="none"/><path d="M324.5 295.5 L324.5 134.5" stroke="#C000C0" stroke-width="1" fill="none"/><path d="M350 106.5 L396 106.5" stroke="#C80000" stroke-width="1"/><path d="M367.0 108.0 L370.0 105.0" stroke="#5040E0" stroke-width="0.9"/><path d="M368.5 106.5 L368.5 295.5" stroke="#C80000" stroke-width="1"/><text transform="translate(366.1 126) rotate(-90)" x="0" y="0" font-size="4.44" fill="#10F010" textLength="11" lengthAdjust="spacingAndGlyphs">1.200</text><path d="M361 134.5 L372 134.5" stroke="#C80000" stroke-width="1"/><path d="M367.0 136.0 L370.0 133.0" stroke="#5040E0" stroke-width="0.9"/><path d="M361 158.5 L372 158.5" stroke="#C80000" stroke-width="1"/><path d="M367.0 160.0 L370.0 157.0" stroke="#5040E0" stroke-width="0.9"/><text transform="translate(366.1 152) rotate(-90)" x="0" y="0" font-size="4.44" fill="#10F010" textLength="11" lengthAdjust="spacingAndGlyphs">1.000</text><text transform="translate(365.6 233) rotate(-90)" x="0" y="0" font-size="4.44" fill="#10F010" textLength="12" lengthAdjust="spacingAndGlyphs">3.500</text><text x="394" y="126.19999999999999" font-size="4.44" fill="#10F010" textLength="17" lengthAdjust="spacingAndGlyphs">+105.000</text><path d="M392.5 126.5 L412 126.5" stroke="#C80000" stroke-width="1"/><path d="M392.5 126.5 L392.5 134.5" stroke="#C80000" stroke-width="1"/><path d="M390.5 132.0 H394.5 L392.5 134.5 Z" fill="#00D000"/><path d="M388 134.5 L397.5 134.5" stroke="#C80000" stroke-width="1"/><path d="M315 122.5 L328 122.5" stroke="#C80000" stroke-width="1"/><path d="M316.5 118 L316.5 129" stroke="#C80000" stroke-width="1"/><path d="M327.5 118 L327.5 129" stroke="#C80000" stroke-width="1"/><path d="M315.0 124.0 L318.0 121.0" stroke="#5040E0" stroke-width="0.9"/><path d="M325.5 124.0 L328.5 121.0" stroke="#5040E0" stroke-width="0.9"/><text transform="translate(322.6 121) rotate(-90)" x="0" y="0" font-size="4.44" fill="#10F010" textLength="12" lengthAdjust="spacingAndGlyphs">0.450</text><path d="M327.5 131 L327.5 143" stroke="#C80000" stroke-width="1" stroke-dasharray="2.5 1.5"/><path d="M339 159 L352.5 295.5" stroke="#00D000" stroke-width="1"/><path d="M349.5 192.5 L353.5 192.5" stroke="#00D000" stroke-width="1"/><path d="M353.5 192 L353.5 207" stroke="#00D000" stroke-width="1"/><path d="M350.5 189 L350.5 190.5" stroke="#00D000" stroke-width="1"/><text x="354.5" y="199.8" font-size="3.61" fill="#10F010" textLength="4.5" lengthAdjust="spacingAndGlyphs">n5</text><path d="M292 271.5 L316.5 271.5" stroke="#C80000" stroke-width="1"/><path d="M280.5 326.5 L280.5 295.5 L324.5 295.5" stroke="#C000C0" stroke-width="1" fill="none"/><path d="M324.5 295.5 L352.5 295.5" stroke="#00D000" stroke-width="1" stroke-dasharray="2 2"/><path d="M352.5 295.5 L434.5 295.5 L434.5 326.5" stroke="#C000C0" stroke-width="1" fill="none"/><rect x="278.5" y="326.5" width="158" height="2" stroke="#C000C0" stroke-width="1" fill="none"/><path d="M315 307.5 L353 307.5" stroke="#C80000" stroke-width="1"/><path d="M316.5 300 L316.5 312" stroke="#C80000" stroke-width="1"/><path d="M315.0 308.5 L318.0 305.5" stroke="#5040E0" stroke-width="0.9"/><path d="M324.5 300 L324.5 312" stroke="#C80000" stroke-width="1"/><path d="M323.0 308.5 L326.0 305.5" stroke="#5040E0" stroke-width="0.9"/><path d="M352.5 300 L352.5 312" stroke="#C80000" stroke-width="1"/><path d="M351.0 308.5 L354.0 305.5" stroke="#5040E0" stroke-width="0.9"/><text x="333" y="305.1" font-size="4.44" fill="#10F010" textLength="12" lengthAdjust="spacingAndGlyphs">1.450</text><text transform="translate(321.1 322) rotate(-90)" x="0" y="0" font-size="4.44" fill="#10F010" textLength="12" lengthAdjust="spacingAndGlyphs">0.250</text><path d="M279 337.5 L434.5 337.5" stroke="#C80000" stroke-width="1"/><path d="M280.5 331 L280.5 354" stroke="#C80000" stroke-width="1"/><path d="M316.5 331 L316.5 342" stroke="#C80000" stroke-width="1"/><path d="M434.5 331 L434.5 354" stroke="#C80000" stroke-width="1"/><path d="M279.0 339.0 L282.0 336.0" stroke="#5040E0" stroke-width="0.9"/><path d="M315.0 339.0 L318.0 336.0" stroke="#5040E0" stroke-width="0.9"/><path d="M433.0 339.0 L436.0 336.0" stroke="#5040E0" stroke-width="0.9"/><text x="292" y="335.6" font-size="4.44" fill="#10F010" textLength="12" lengthAdjust="spacingAndGlyphs">1.500</text><text x="369" y="335.6" font-size="4.44" fill="#10F010" textLength="12" lengthAdjust="spacingAndGlyphs">5.000</text><path d="M279 349.5 L434.5 349.5" stroke="#C80000" stroke-width="1"/><path d="M279.0 351.0 L282.0 348.0" stroke="#5040E0" stroke-width="0.9"/><path d="M433.0 351.0 L436.0 348.0" stroke="#5040E0" stroke-width="0.9"/><text x="351" y="347.6" font-size="4.44" fill="#10F010" textLength="12" lengthAdjust="spacingAndGlyphs">6.500</text><text x="461" y="317.20000000000005" font-size="4.44" fill="#10F010" textLength="15" lengthAdjust="spacingAndGlyphs">+98.700</text><path d="M459 317.5 L478 317.5" stroke="#C80000" stroke-width="1"/><path d="M459.5 317.8 L459.5 326" stroke="#C80000" stroke-width="1"/><path d="M457 323.5 H461 L459 326 Z" fill="#00D000"/><path d="M454 326.5 L464 326.5" stroke="#C80000" stroke-width="1"/><text x="525.7" y="55.099999999999994" font-size="6.39" fill="#E000E0" textLength="23.59999999999991" lengthAdjust="spacingAndGlyphs">ALZADO</text><text x="553.3" y="55.099999999999994" font-size="6.39" fill="#E000E0" textLength="15.5" lengthAdjust="spacingAndGlyphs">MURO</text><text x="573.7" y="55.099999999999994" font-size="6.39" fill="#E000E0" textLength="7.2999999999999545" lengthAdjust="spacingAndGlyphs">DE</text><text x="585.9" y="55.099999999999994" font-size="6.39" fill="#E000E0" textLength="50.39999999999998" lengthAdjust="spacingAndGlyphs">CONTRAFUERTES</text><text x="525.7" y="61.4" font-size="4.44" fill="#2828FF" textLength="15.299999999999955" lengthAdjust="spacingAndGlyphs">ESCALA</text><text x="542.8" y="61.4" font-size="4.44" fill="#2828FF" textLength="8.900000000000091" lengthAdjust="spacingAndGlyphs">1/50</text><path d="M570 83.5 L711.5 83.5" stroke="#C80000" stroke-width="1"/><path d="M570.5 78 L570.5 102" stroke="#C80000" stroke-width="1"/><path d="M568.5 85.0 L571.5 82.0" stroke="#5040E0" stroke-width="0.9"/><path d="M599.5 78 L599.5 102" stroke="#C80000" stroke-width="1"/><path d="M598.0 85.0 L601.0 82.0" stroke="#5040E0" stroke-width="0.9"/><path d="M682.5 78 L682.5 102" stroke="#C80000" stroke-width="1"/><path d="M680.5 85.0 L683.5 82.0" stroke="#5040E0" stroke-width="0.9"/><path d="M711.5 78 L711.5 102" stroke="#C80000" stroke-width="1"/><path d="M710.0 85.0 L713.0 82.0" stroke="#5040E0" stroke-width="0.9"/><text x="578" y="81.6" font-size="4.44" fill="#10F010" textLength="12" lengthAdjust="spacingAndGlyphs">1.250</text><text x="635" y="81.6" font-size="4.44" fill="#10F010" textLength="12" lengthAdjust="spacingAndGlyphs">2.500</text><text x="691" y="81.6" font-size="4.44" fill="#10F010" textLength="12" lengthAdjust="spacingAndGlyphs">1.250</text><text transform="translate(600.85 99) rotate(-90)" x="0" y="0" font-size="4.44" fill="#10F010" textLength="12" lengthAdjust="spacingAndGlyphs">0.400</text><path d="M593.0 101.5 L605.5 101.5" stroke="#C80000" stroke-width="1"/><path d="M594.5 99 L594.5 103" stroke="#C80000" stroke-width="1"/><path d="M604.5 99 L604.5 103" stroke="#C80000" stroke-width="1"/><path d="M593.0 102.5 L596.0 99.5" stroke="#5040E0" stroke-width="0.9"/><path d="M602.5 102.5 L605.5 99.5" stroke="#5040E0" stroke-width="0.9"/><text transform="translate(683.6 99) rotate(-90)" x="0" y="0" font-size="4.44" fill="#10F010" textLength="12" lengthAdjust="spacingAndGlyphs">0.400</text><path d="M675.5 101.5 L688.5 101.5" stroke="#C80000" stroke-width="1"/><path d="M677.5 99 L677.5 103" stroke="#C80000" stroke-width="1"/><path d="M687.5 99 L687.5 103" stroke="#C80000" stroke-width="1"/><path d="M675.5 102.5 L678.5 99.5" stroke="#5040E0" stroke-width="0.9"/><path d="M685.5 102.5 L688.5 99.5" stroke="#5040E0" stroke-width="0.9"/><text x="527" y="97.6" font-size="4.44" fill="#10F010" textLength="17" lengthAdjust="spacingAndGlyphs">+108.000</text><path d="M527 98.5 L546 98.5" stroke="#C80000" stroke-width="1"/><path d="M546.5 98.5 L546.5 106.5" stroke="#C80000" stroke-width="1"/><path d="M544 104.0 H548 L546 106.5 Z" fill="#00D000"/><path d="M540 106.5 L550 106.5" stroke="#C80000" stroke-width="1"/><text x="527" y="142.9" font-size="4.44" fill="#10F010" textLength="17" lengthAdjust="spacingAndGlyphs">+106.000</text><path d="M526 143.5 L546 143.5" stroke="#C80000" stroke-width="1"/><path d="M546.5 135.5 L546.5 143.5" stroke="#C80000" stroke-width="1"/><path d="M544 138.0 H548 L546 135.5 Z" fill="#00D000"/><path d="M540 135.5 L549.5 135.5" stroke="#C80000" stroke-width="1"/><text x="527" y="263.1" font-size="4.44" fill="#10F010" textLength="17" lengthAdjust="spacingAndGlyphs">+24.000</text><path d="M527 263.5 L546 263.5" stroke="#C80000" stroke-width="1"/><path d="M546.5 263.5 L546.5 271.5" stroke="#C80000" stroke-width="1"/><path d="M544 269.0 H548 L546 271.5 Z" fill="#00D000"/><path d="M540 271.5 L550 271.5" stroke="#C80000" stroke-width="1"/><text x="527" y="318.6" font-size="4.44" fill="#10F010" textLength="17" lengthAdjust="spacingAndGlyphs">+22.700</text><path d="M527 319.5 L546 319.5" stroke="#C80000" stroke-width="1"/><path d="M546.5 319 L546.5 327" stroke="#C80000" stroke-width="1"/><path d="M544 324.5 H548 L546 327 Z" fill="#00D000"/><path d="M540 327.5 L550 327.5" stroke="#C80000" stroke-width="1"/><text x="737" y="97.6" font-size="4.44" fill="#10F010" textLength="17" lengthAdjust="spacingAndGlyphs">+108.000</text><path d="M736 98.5 L755 98.5" stroke="#C80000" stroke-width="1"/><path d="M736.5 98.5 L736.5 107" stroke="#C80000" stroke-width="1"/><path d="M734 104.5 H738 L736 107 Z" fill="#00D000"/><path d="M731 107.5 L741 107.5" stroke="#C80000" stroke-width="1"/><text x="737" y="142.9" font-size="4.44" fill="#10F010" textLength="17" lengthAdjust="spacingAndGlyphs">+106.000</text><path d="M736 143.5 L756 143.5" stroke="#C80000" stroke-width="1"/><path d="M736.5 135.5 L736.5 143.5" stroke="#C80000" stroke-width="1"/><path d="M734 138.0 H738 L736 135.5 Z" fill="#00D000"/><path d="M731 135.5 L740 135.5" stroke="#C80000" stroke-width="1"/><text x="737" y="263.1" font-size="4.44" fill="#10F010" textLength="17" lengthAdjust="spacingAndGlyphs">+24.000</text><path d="M736 263.5 L755 263.5" stroke="#C80000" stroke-width="1"/><path d="M736.5 263.5 L736.5 271.5" stroke="#C80000" stroke-width="1"/><path d="M734 269.0 H738 L736 271.5 Z" fill="#00D000"/><path d="M731 271.5 L741 271.5" stroke="#C80000" stroke-width="1"/><text x="737" y="318.6" font-size="4.44" fill="#10F010" textLength="17" lengthAdjust="spacingAndGlyphs">+22.700</text><path d="M736 319.5 L755 319.5" stroke="#C80000" stroke-width="1"/><path d="M736.5 319 L736.5 327" stroke="#C80000" stroke-width="1"/><path d="M734 324.5 H738 L736 327 Z" fill="#00D000"/><path d="M731 327.5 L741 327.5" stroke="#C80000" stroke-width="1"/><path d="M553 106.5 L565 106.5" stroke="#C80000" stroke-width="1"/><path d="M556.5 108.0 L559.5 105.0" stroke="#5040E0" stroke-width="0.9"/><path d="M558.5 106.5 L558.5 295.5" stroke="#C80000" stroke-width="1"/><path d="M554 295.5 L565 295.5" stroke="#C80000" stroke-width="1"/><path d="M556.5 297.0 L559.5 294.0" stroke="#5040E0" stroke-width="0.9"/><text transform="translate(556.1 207) rotate(-90)" x="0" y="0" font-size="4.44" fill="#10F010" textLength="12" lengthAdjust="spacingAndGlyphs">6.000</text><path d="M716 107.5 L730 107.5" stroke="#C80000" stroke-width="1"/><path d="M722.0 108.5 L725.0 105.5" stroke="#5040E0" stroke-width="0.9"/><path d="M723.5 107 L723.5 327" stroke="#C80000" stroke-width="1"/><path d="M716 295.5 L728 295.5" stroke="#C80000" stroke-width="1"/><path d="M722.0 297.0 L725.0 294.0" stroke="#5040E0" stroke-width="0.9"/><path d="M716 327.5 L728 327.5" stroke="#C80000" stroke-width="1"/><path d="M722.0 328.5 L725.0 325.5" stroke="#5040E0" stroke-width="0.9"/><text transform="translate(721.1 207) rotate(-90)" x="0" y="0" font-size="4.44" fill="#10F010" textLength="12" lengthAdjust="spacingAndGlyphs">6.000</text><text transform="translate(720.6 318) rotate(-90)" x="0" y="0" font-size="4.44" fill="#10F010" textLength="13" lengthAdjust="spacingAndGlyphs">1.300</text><rect x="570.5" y="107.5" width="141" height="221.5" stroke="#00D000" stroke-width="1" fill="none"/><path d="M570.5 135.5 L711.5 135.5" stroke="#00D000" stroke-width="1"/><path d="M570.5 295.5 L711.5 295.5" stroke="#00D000" stroke-width="1"/><path d="M570.5 326.5 L711.5 326.5" stroke="#00D000" stroke-width="1"/><path d="M570.5 159.5 L711.5 159.5" stroke="#C8C800" stroke-width="1.2" stroke-dasharray="1.5 1.5"/><path d="M570.5 272.5 L711.5 272.5" stroke="#C8C800" stroke-width="1.2" stroke-dasharray="1.5 1.5"/><path d="M594.5 159 L594.5 295.5" stroke="#C8C800" stroke-width="1.2" stroke-dasharray="1.5 1.5"/><path d="M604.5 159 L604.5 295.5" stroke="#C8C800" stroke-width="1.2" stroke-dasharray="1.5 1.5"/><path d="M677.5 159 L677.5 295.5" stroke="#C8C800" stroke-width="1.2" stroke-dasharray="1.5 1.5"/><path d="M687.5 159 L687.5 295.5" stroke="#C8C800" stroke-width="1.2" stroke-dasharray="1.5 1.5"/><path d="M641.5 135.5 L641.5 159" stroke="#C80000" stroke-width="1"/><path d="M639.5 137.0 L642.5 134.0" stroke="#5040E0" stroke-width="0.9"/><path d="M639.5 160.5 L642.5 157.5" stroke="#5040E0" stroke-width="0.9"/><text transform="translate(639.1 152) rotate(-90)" x="0" y="0" font-size="4.44" fill="#10F010" textLength="11" lengthAdjust="spacingAndGlyphs">1.000</text><path d="M593.0 301.5 L605.5 301.5" stroke="#C80000" stroke-width="1"/><path d="M594.5 300 L594.5 306.5" stroke="#C80000" stroke-width="1"/><path d="M604.5 300 L604.5 306.5" stroke="#C80000" stroke-width="1"/><path d="M593.0 302.5 L596.0 299.5" stroke="#5040E0" stroke-width="0.9"/><path d="M602.5 302.5 L605.5 299.5" stroke="#5040E0" stroke-width="0.9"/><text transform="translate(600.85 316) rotate(-90)" x="0" y="0" font-size="4.44" fill="#10F010" textLength="12" lengthAdjust="spacingAndGlyphs">0.400</text><path d="M675.5 301.5 L688.5 301.5" stroke="#C80000" stroke-width="1"/><path d="M677.5 300 L677.5 306.5" stroke="#C80000" stroke-width="1"/><path d="M687.5 300 L687.5 306.5" stroke="#C80000" stroke-width="1"/><path d="M675.5 302.5 L678.5 299.5" stroke="#5040E0" stroke-width="0.9"/><path d="M685.5 302.5 L688.5 299.5" stroke="#5040E0" stroke-width="0.9"/><text transform="translate(683.6 316) rotate(-90)" x="0" y="0" font-size="4.44" fill="#10F010" textLength="12" lengthAdjust="spacingAndGlyphs">0.400</text><path d="M570 344.5 L711.5 344.5" stroke="#C80000" stroke-width="1"/><path d="M570.5 332 L570.5 350" stroke="#C80000" stroke-width="1"/><path d="M711.5 332 L711.5 350" stroke="#C80000" stroke-width="1"/><path d="M568.5 346.0 L571.5 343.0" stroke="#5040E0" stroke-width="0.9"/><path d="M710.0 346.0 L713.0 343.0" stroke="#5040E0" stroke-width="0.9"/><text x="635" y="342.6" font-size="4.44" fill="#10F010" textLength="12" lengthAdjust="spacingAndGlyphs">6.000</text></svg>
<div style="left:49px;top:58px;width:152px;height:290.5px;background:#728EE6;border-radius:4px 4px 0 0"></div>
<div style="left:49px;top:58px;width:152px;height:19px;background:linear-gradient(#AAC4F4 0%,#8AA8EB 10%,#7896E0 25%,#7796E0 50%,#7CA1E7 78%,#80A8EA 88%,#6A8AE2 100%);border-radius:4px 4px 0 0;border:1px solid #728EE6;border-bottom:none"></div>
<div class="t" style="left:64px;top:63.8px;height:10px;line-height:10px;font-size:8.7px;color:#E6EDFB;font-weight:bold;letter-spacing:-0.3px">estribo1</div>
<div style="left:185.3px;top:61.5px;width:12.5px;height:12.5px;border-radius:2px;border:1px solid #B5C6F0;background:linear-gradient(#D392A4,#BE7187)"></div>
<svg style="left:185.3px;top:61.5px" width="13" height="13"><path d="M3.5 3.5 L9 9 M9 3.5 L3.5 9" stroke="#fff" stroke-width="1.5"/></svg>
<div style="left:170.60000000000002px;top:61.5px;width:12.5px;height:12.5px;border-radius:2px;border:1px solid #B5C6F0;background:linear-gradient(#6E92EA,#4D75DE)"></div>
<svg style="left:170.60000000000002px;top:61.5px" width="13" height="13"><rect x="3" y="3" width="6.5" height="6" stroke="#fff" stroke-width="1" fill="none"/><path d="M3 3.7 H9.5" stroke="#fff" stroke-width="1.6"/></svg>
<div style="left:155.90000000000003px;top:61.5px;width:12.5px;height:12.5px;border-radius:2px;border:1px solid #B5C6F0;background:linear-gradient(#6E92EA,#4D75DE)"></div>
<div style="left:158.90000000000003px;top:69px;width:4.5px;height:2px;background:#fff"></div>
<svg style="left:51.5px;top:62.5px" width="11" height="11"><rect x="0.5" y="0.5" width="10" height="10" fill="#ECE9D8" stroke="#9C9A8E"/><path d="M5.5 2 L3 8 M5.5 2 L8 8 M2 8.5 H9" stroke="#444" stroke-width="0.9" fill="none"/></svg>
<div style="left:51px;top:76.5px;width:148px;height:269.5px;background:#FFFFFF;border-left:1.2px solid #8E8C80;border-top:1px solid #D5D2C5"></div>
<div class="t" style="left:65px;top:77.8px;height:10px;line-height:10px;font-size:7.1px;color:#111111;font-weight:normal;-webkit-text-stroke-width:0.2px;letter-spacing:-0.18px">Muro de Contrafuertes</div>
<div class="t" style="left:77px;top:87.8px;height:10px;line-height:10px;font-size:7.1px;color:#111111;font-weight:normal;-webkit-text-stroke-width:0.2px;letter-spacing:-0.18px">Proyecto</div>
<div class="t" style="left:89px;top:97.8px;height:10px;line-height:10px;font-size:7.1px;color:#111111;font-weight:normal;-webkit-text-stroke-width:0.2px;letter-spacing:-0.18px">Nuevo</div>
<div class="t" style="left:89px;top:107.8px;height:10px;line-height:10px;font-size:7.1px;color:#111111;font-weight:normal;-webkit-text-stroke-width:0.2px;letter-spacing:-0.18px">Abrir</div>
<div class="t" style="left:89px;top:117.8px;height:10px;line-height:10px;font-size:7.1px;color:#111111;font-weight:normal;-webkit-text-stroke-width:0.2px;letter-spacing:-0.18px">Guardar</div>
<div class="t" style="left:89px;top:127.80000000000001px;height:10px;line-height:10px;font-size:7.1px;color:#111111;font-weight:normal;-webkit-text-stroke-width:0.2px;letter-spacing:-0.18px">Guardar como...</div>
<div class="t" style="left:89px;top:137.8px;height:10px;line-height:10px;font-size:7.1px;color:#111111;font-weight:normal;-webkit-text-stroke-width:0.2px;letter-spacing:-0.18px">Guardar muro</div>
<div class="t" style="left:77px;top:147.8px;height:10px;line-height:10px;font-size:7.1px;color:#111111;font-weight:normal;-webkit-text-stroke-width:0.2px;letter-spacing:-0.18px">Entrada</div>
<div class="t" style="left:77px;top:157.8px;height:10px;line-height:10px;font-size:7.1px;color:#111111;font-weight:normal;-webkit-text-stroke-width:0.2px;letter-spacing:-0.18px">Calculo</div>
<div class="t" style="left:89px;top:167.8px;height:10px;line-height:10px;font-size:7.1px;color:#111111;font-weight:normal;-webkit-text-stroke-width:0.2px;letter-spacing:-0.18px">Encaje</div>
<div class="t" style="left:89px;top:177.8px;height:10px;line-height:10px;font-size:7.1px;color:#111111;font-weight:normal;-webkit-text-stroke-width:0.2px;letter-spacing:-0.18px">Predimensionamiento</div>
<div class="t" style="left:89px;top:187.8px;height:10px;line-height:10px;font-size:7.1px;color:#111111;font-weight:normal;-webkit-text-stroke-width:0.2px;letter-spacing:-0.18px">Deslizamiento</div>
<div class="t" style="left:89px;top:197.8px;height:10px;line-height:10px;font-size:7.1px;color:#111111;font-weight:normal;-webkit-text-stroke-width:0.2px;letter-spacing:-0.18px">Vuelco</div>
<div class="t" style="left:89px;top:207.8px;height:10px;line-height:10px;font-size:7.1px;color:#111111;font-weight:normal;-webkit-text-stroke-width:0.2px;letter-spacing:-0.18px">Tensiones en Terreno</div>
<div class="t" style="left:89px;top:217.8px;height:10px;line-height:10px;font-size:7.1px;color:#111111;font-weight:normal;-webkit-text-stroke-width:0.2px;letter-spacing:-0.18px">Panel</div>
<div class="t" style="left:89px;top:227.8px;height:10px;line-height:10px;font-size:7.1px;color:#111111;font-weight:normal;-webkit-text-stroke-width:0.2px;letter-spacing:-0.18px">Contrafuerte</div>
<div class="t" style="left:89px;top:237.8px;height:10px;line-height:10px;font-size:7.1px;color:#111111;font-weight:normal;-webkit-text-stroke-width:0.2px;letter-spacing:-0.18px">Zapata</div>
<div class="t" style="left:77px;top:247.8px;height:10px;line-height:10px;font-size:7.1px;color:#111111;font-weight:normal;-webkit-text-stroke-width:0.2px;letter-spacing:-0.18px">Salida</div>
<div class="t" style="left:89px;top:257.8px;height:10px;line-height:10px;font-size:7.1px;color:#111111;font-weight:normal;-webkit-text-stroke-width:0.2px;letter-spacing:-0.18px">Memoria</div>
<div class="t" style="left:89px;top:267.8px;height:10px;line-height:10px;font-size:7.1px;color:#111111;font-weight:normal;-webkit-text-stroke-width:0.2px;letter-spacing:-0.18px">Sección</div>
<div class="t" style="left:89px;top:277.8px;height:10px;line-height:10px;font-size:7.1px;color:#111111;font-weight:normal;-webkit-text-stroke-width:0.2px;letter-spacing:-0.18px">Alzado</div>
<div class="t" style="left:89px;top:287.8px;height:10px;line-height:10px;font-size:7.1px;color:#111111;font-weight:normal;-webkit-text-stroke-width:0.2px;letter-spacing:-0.18px">Planta</div>
<div class="t" style="left:89px;top:297.8px;height:10px;line-height:10px;font-size:7.1px;color:#111111;font-weight:normal;-webkit-text-stroke-width:0.2px;letter-spacing:-0.18px">Alzado general</div>
<div class="t" style="left:89px;top:307.8px;height:10px;line-height:10px;font-size:7.1px;color:#111111;font-weight:normal;-webkit-text-stroke-width:0.2px;letter-spacing:-0.18px">Sección armadura contrafuerte</div>
<div class="t" style="left:89px;top:317.8px;height:10px;line-height:10px;font-size:7.1px;color:#111111;font-weight:normal;-webkit-text-stroke-width:0.2px;letter-spacing:-0.18px">Armadura</div>
<svg style="left:0;top:0" width="800" height="640"><path d="M70.5 87 V252" stroke="#DEDCD2" stroke-width="1"/><path d="M82.5 97 V142.5" stroke="#DEDCD2" stroke-width="1"/><path d="M82.5 167 V242.5" stroke="#DEDCD2" stroke-width="1"/><path d="M82.5 257 V322.5" stroke="#DEDCD2" stroke-width="1"/><rect x="55.5" y="80.0" width="6" height="6" fill="#FFF" stroke="#B4B1A2" stroke-width="0.9"/><path d="M57 83.0 H60" stroke="#222" stroke-width="0.9"/><path d="M61.5 83.0 H64" stroke="#DEDCD2" stroke-width="1"/><rect x="67.5" y="90.0" width="6" height="6" fill="#FFF" stroke="#B4B1A2" stroke-width="0.9"/><path d="M69 93.0 H72" stroke="#222" stroke-width="0.9"/><path d="M73.5 93.0 H76" stroke="#DEDCD2" stroke-width="1"/><path d="M82.5 102.5 H87.5" stroke="#DEDCD2" stroke-width="1"/><path d="M82.5 112.5 H87.5" stroke="#DEDCD2" stroke-width="1"/><path d="M82.5 122.5 H87.5" stroke="#DEDCD2" stroke-width="1"/><path d="M82.5 132.5 H87.5" stroke="#DEDCD2" stroke-width="1"/><path d="M82.5 142.5 H87.5" stroke="#DEDCD2" stroke-width="1"/><rect x="67.5" y="150.0" width="6" height="6" fill="#FFF" stroke="#B4B1A2" stroke-width="0.9"/><path d="M69 153.0 H72" stroke="#222" stroke-width="0.9"/><path d="M70.5 151.5 V154.5" stroke="#222" stroke-width="0.9"/><path d="M73.5 153.0 H76" stroke="#DEDCD2" stroke-width="1"/><rect x="67.5" y="160.0" width="6" height="6" fill="#FFF" stroke="#B4B1A2" stroke-width="0.9"/><path d="M69 163.0 H72" stroke="#222" stroke-width="0.9"/><path d="M73.5 163.0 H76" stroke="#DEDCD2" stroke-width="1"/><path d="M82.5 172.5 H87.5" stroke="#DEDCD2" stroke-width="1"/><path d="M82.5 182.5 H87.5" stroke="#DEDCD2" stroke-width="1"/><path d="M82.5 192.5 H87.5" stroke="#DEDCD2" stroke-width="1"/><path d="M82.5 202.5 H87.5" stroke="#DEDCD2" stroke-width="1"/><path d="M82.5 212.5 H87.5" stroke="#DEDCD2" stroke-width="1"/><path d="M82.5 222.5 H87.5" stroke="#DEDCD2" stroke-width="1"/><path d="M82.5 232.5 H87.5" stroke="#DEDCD2" stroke-width="1"/><path d="M82.5 242.5 H87.5" stroke="#DEDCD2" stroke-width="1"/><rect x="67.5" y="250.0" width="6" height="6" fill="#FFF" stroke="#B4B1A2" stroke-width="0.9"/><path d="M69 253.0 H72" stroke="#222" stroke-width="0.9"/><path d="M73.5 253.0 H76" stroke="#DEDCD2" stroke-width="1"/><path d="M82.5 262.5 H87.5" stroke="#DEDCD2" stroke-width="1"/><path d="M82.5 272.5 H87.5" stroke="#DEDCD2" stroke-width="1"/><path d="M82.5 282.5 H87.5" stroke="#DEDCD2" stroke-width="1"/><path d="M82.5 292.5 H87.5" stroke="#DEDCD2" stroke-width="1"/><path d="M82.5 302.5 H87.5" stroke="#DEDCD2" stroke-width="1"/><path d="M82.5 312.5 H87.5" stroke="#DEDCD2" stroke-width="1"/><path d="M82.5 322.5 H87.5" stroke="#DEDCD2" stroke-width="1"/></svg>
<div style="left:51px;top:355px;width:361.5px;height:217.79999999999995px;background:#728EE6;border-radius:4px 4px 0 0"></div>
<div style="left:51px;top:355px;width:361.5px;height:18px;background:linear-gradient(#AAC4F4 0%,#8AA8EB 10%,#7896E0 25%,#7796E0 50%,#7CA1E7 78%,#80A8EA 88%,#6A8AE2 100%);border-radius:4px 4px 0 0;border:1px solid #728EE6;border-bottom:none"></div>
<div class="t" style="left:55.5px;top:360.3px;height:10px;line-height:10px;font-size:8.5px;color:#E6EDFB;font-weight:bold;letter-spacing:-0.18px">Cálculo de contrafuertes</div>
<div style="left:396.8px;top:358.5px;width:12.5px;height:12.5px;border-radius:2px;border:1px solid #B5C6F0;background:linear-gradient(#D392A4,#BE7187)"></div>
<svg style="left:396.8px;top:358.5px" width="13" height="13"><path d="M3.5 3.5 L9 9 M9 3.5 L3.5 9" stroke="#fff" stroke-width="1.5"/></svg>
<div style="left:53px;top:372.5px;width:357.5px;height:198.5px;background:#ECE9D8"></div>
<div style="left:60px;top:380px;width:345px;height:131.5px;background:#C0C0C0"></div>
<svg style="left:0;top:0" width="800" height="640"><rect x="60" y="380" width="20.5" height="21.5" fill="#ECE9D8"/><path d="M61 401.0 V381 H79.5" stroke="#FFFFFF" stroke-width="1" fill="none"/><rect x="80.5" y="380" width="36.0" height="21.5" fill="#ECE9D8"/><path d="M81.5 401.0 V381 H115.5" stroke="#FFFFFF" stroke-width="1" fill="none"/><rect x="116.5" y="380" width="26.0" height="21.5" fill="#ECE9D8"/><path d="M117.5 401.0 V381 H141.5" stroke="#FFFFFF" stroke-width="1" fill="none"/><rect x="142.5" y="380" width="25.0" height="21.5" fill="#ECE9D8"/><path d="M143.5 401.0 V381 H166.5" stroke="#FFFFFF" stroke-width="1" fill="none"/><rect x="167.5" y="380" width="31.0" height="21.5" fill="#ECE9D8"/><path d="M168.5 401.0 V381 H197.5" stroke="#FFFFFF" stroke-width="1" fill="none"/><rect x="198.5" y="380" width="41.0" height="21.5" fill="#ECE9D8"/><path d="M199.5 401.0 V381 H238.5" stroke="#FFFFFF" stroke-width="1" fill="none"/><rect x="239.5" y="380" width="35.0" height="21.5" fill="#ECE9D8"/><path d="M240.5 401.0 V381 H273.5" stroke="#FFFFFF" stroke-width="1" fill="none"/><rect x="274.5" y="380" width="20.5" height="21.5" fill="#ECE9D8"/><path d="M275.5 401.0 V381 H294" stroke="#FFFFFF" stroke-width="1" fill="none"/><rect x="295" y="380" width="20.5" height="21.5" fill="#ECE9D8"/><path d="M296 401.0 V381 H314.5" stroke="#FFFFFF" stroke-width="1" fill="none"/><rect x="315.5" y="380" width="41.0" height="21.5" fill="#ECE9D8"/><path d="M316.5 401.0 V381 H355.5" stroke="#FFFFFF" stroke-width="1" fill="none"/><rect x="356.5" y="380" width="35.5" height="21.5" fill="#ECE9D8"/><path d="M357.5 401.0 V381 H391" stroke="#FFFFFF" stroke-width="1" fill="none"/><rect x="60" y="401.5" width="20.5" height="10" fill="#ECE9D8"/><path d="M61 411.0 V402.5 H79.5" stroke="#FFFFFF" stroke-width="1" fill="none"/><path d="M60 411.0 H80.5" stroke="#404040" stroke-width="1"/><rect x="60" y="411.5" width="20.5" height="10" fill="#ECE9D8"/><path d="M61 421.0 V412.5 H79.5" stroke="#FFFFFF" stroke-width="1" fill="none"/><path d="M60 421.0 H80.5" stroke="#404040" stroke-width="1"/><rect x="60" y="421.5" width="20.5" height="10" fill="#ECE9D8"/><path d="M61 431.0 V422.5 H79.5" stroke="#FFFFFF" stroke-width="1" fill="none"/><path d="M60 431.0 H80.5" stroke="#404040" stroke-width="1"/><rect x="80.5" y="401.5" width="311.5" height="30" fill="#FFFFFF"/><path d="M80.5 411.0 H392" stroke="#D4D0C8" stroke-width="1"/><path d="M80.5 421.0 H392" stroke="#D4D0C8" stroke-width="1"/><path d="M80.5 431.0 H392" stroke="#D4D0C8" stroke-width="1"/><path d="M116.5 401.5 V431.5" stroke="#D4D0C8" stroke-width="1"/><path d="M142.5 401.5 V431.5" stroke="#D4D0C8" stroke-width="1"/><path d="M167.5 401.5 V431.5" stroke="#D4D0C8" stroke-width="1"/><path d="M198.5 401.5 V431.5" stroke="#D4D0C8" stroke-width="1"/><path d="M239.5 401.5 V431.5" stroke="#D4D0C8" stroke-width="1"/><path d="M274.5 401.5 V431.5" stroke="#D4D0C8" stroke-width="1"/><path d="M294.5 401.5 V431.5" stroke="#D4D0C8" stroke-width="1"/><path d="M315.5 401.5 V431.5" stroke="#D4D0C8" stroke-width="1"/><path d="M356.5 401.5 V431.5" stroke="#D4D0C8" stroke-width="1"/><path d="M391.5 401.5 V431.5" stroke="#D4D0C8" stroke-width="1"/><path d="M80.5 380 V401.5" stroke="#404040" stroke-width="1"/><path d="M116.5 380 V401.5" stroke="#404040" stroke-width="1"/><path d="M142.5 380 V401.5" stroke="#404040" stroke-width="1"/><path d="M167.5 380 V401.5" stroke="#404040" stroke-width="1"/><path d="M198.5 380 V401.5" stroke="#404040" stroke-width="1"/><path d="M239.5 380 V401.5" stroke="#404040" stroke-width="1"/><path d="M274.5 380 V401.5" stroke="#404040" stroke-width="1"/><path d="M294.5 380 V401.5" stroke="#404040" stroke-width="1"/><path d="M315.5 380 V401.5" stroke="#404040" stroke-width="1"/><path d="M356.5 380 V401.5" stroke="#404040" stroke-width="1"/><path d="M391.5 380 V401.5" stroke="#404040" stroke-width="1"/><path d="M80.5 401.5 V431.5" stroke="#404040" stroke-width="1"/><path d="M60 401.0 H392" stroke="#404040" stroke-width="1"/><path d="M60.5 510.5 V380.5 H404" stroke="#404040" stroke-width="1" fill="none"/><path d="M60 511.0 H404.5 V380" stroke="#404040" stroke-width="1" fill="none"/><path d="M60 512.0 H405.5 V380" stroke="#F0EFE8" stroke-width="1" fill="none"/><rect x="357.0" y="422.0" width="34.5" height="9" stroke="#000" stroke-width="1.3" fill="none"/></svg>
<div class="t" style="left:-101.5px;width:400px;text-align:center;top:386.25px;height:10px;line-height:10px;font-size:7.6px;color:#111;font-weight:bold;">Z (m)</div>
<div class="t" style="left:-70.5px;width:400px;text-align:center;top:386.25px;height:10px;line-height:10px;font-size:7.6px;color:#111;font-weight:bold;">C (m)</div>
<div class="t" style="left:-45.0px;width:400px;text-align:center;top:381.95px;height:10px;line-height:10px;font-size:7.6px;color:#111;font-weight:bold;">Cpan</div>
<div class="t" style="left:-45.0px;width:400px;text-align:center;top:390.05px;height:10px;line-height:10px;font-size:7.6px;color:#111;font-weight:bold;">(m)</div>
<div class="t" style="left:-17.0px;width:400px;text-align:center;top:381.95px;height:10px;line-height:10px;font-size:7.6px;color:#111;font-weight:bold;">P</div>
<div class="t" style="left:-17.0px;width:400px;text-align:center;top:390.05px;height:10px;line-height:10px;font-size:7.6px;color:#111;font-weight:bold;">(T/m2)</div>
<div class="t" style="left:19.0px;width:400px;text-align:center;top:386.25px;height:10px;line-height:10px;font-size:7.6px;color:#111;font-weight:bold;">Md (mT)</div>
<div class="t" style="left:57.0px;width:400px;text-align:center;top:386.25px;height:10px;line-height:10px;font-size:7.6px;color:#111;font-weight:bold;">Nd (T)</div>
<div class="t" style="left:84.75px;width:400px;text-align:center;top:386.25px;height:10px;line-height:10px;font-size:7.6px;color:#111;font-weight:bold;">N1</div>
<div class="t" style="left:105.25px;width:400px;text-align:center;top:386.25px;height:10px;line-height:10px;font-size:7.6px;color:#111;font-weight:bold;">N2</div>
<div class="t" style="left:136.0px;width:400px;text-align:center;top:386.25px;height:10px;line-height:10px;font-size:7.6px;color:#111;font-weight:bold;">Vred (T)</div>
<div class="t" style="left:174.25px;width:400px;text-align:center;top:381.95px;height:10px;line-height:10px;font-size:7.6px;color:#111;font-weight:bold;">As</div>
<div class="t" style="left:174.25px;width:400px;text-align:center;top:390.05px;height:10px;line-height:10px;font-size:7.6px;color:#111;font-weight:bold;">(cm2/m)</div>
<div class="t" style="left:-129.75px;width:400px;text-align:center;top:402.3px;height:10px;line-height:10px;font-size:8.2px;color:#111;font-weight:bold;">1</div>
<div class="t" style="left:-85.0px;width:200px;text-align:right;top:402.0px;height:10px;line-height:10px;font-size:7.4px;color:#1C1C1C;font-weight:normal;letter-spacing:-0.2px;-webkit-text-stroke-width:0.1px">105,800</div>
<div class="t" style="left:-59.0px;width:200px;text-align:right;top:402.0px;height:10px;line-height:10px;font-size:7.4px;color:#1C1C1C;font-weight:normal;letter-spacing:-0.2px;-webkit-text-stroke-width:0.1px">0,950</div>
<div class="t" style="left:-34.0px;width:200px;text-align:right;top:402.0px;height:10px;line-height:10px;font-size:7.4px;color:#1C1C1C;font-weight:normal;letter-spacing:-0.2px;-webkit-text-stroke-width:0.1px">0,350</div>
<div class="t" style="left:-3.0px;width:200px;text-align:right;top:402.0px;height:10px;line-height:10px;font-size:7.4px;color:#1C1C1C;font-weight:normal;letter-spacing:-0.2px;-webkit-text-stroke-width:0.1px">1,218</div>
<div class="t" style="left:38.0px;width:200px;text-align:right;top:402.0px;height:10px;line-height:10px;font-size:7.4px;color:#1C1C1C;font-weight:normal;letter-spacing:-0.2px;-webkit-text-stroke-width:0.1px">-29,546</div>
<div class="t" style="left:73.0px;width:200px;text-align:right;top:402.0px;height:10px;line-height:10px;font-size:7.4px;color:#1C1C1C;font-weight:normal;letter-spacing:-0.2px;-webkit-text-stroke-width:0.1px">155,014</div>
<div class="t" style="left:93.5px;width:200px;text-align:right;top:402.0px;height:10px;line-height:10px;font-size:7.4px;color:#1C1C1C;font-weight:normal;letter-spacing:-0.2px;-webkit-text-stroke-width:0.1px">0</div>
<div class="t" style="left:114.0px;width:200px;text-align:right;top:402.0px;height:10px;line-height:10px;font-size:7.4px;color:#1C1C1C;font-weight:normal;letter-spacing:-0.2px;-webkit-text-stroke-width:0.1px">0</div>
<div class="t" style="left:155.0px;width:200px;text-align:right;top:402.0px;height:10px;line-height:10px;font-size:7.4px;color:#1C1C1C;font-weight:normal;letter-spacing:-0.2px;-webkit-text-stroke-width:0.1px">16,243</div>
<div class="t" style="left:190.5px;width:200px;text-align:right;top:402.0px;height:10px;line-height:10px;font-size:7.4px;color:#1C1C1C;font-weight:normal;letter-spacing:-0.2px;-webkit-text-stroke-width:0.1px">6,384</div>
<div class="t" style="left:-129.75px;width:400px;text-align:center;top:412.3px;height:10px;line-height:10px;font-size:8.2px;color:#111;font-weight:bold;">2</div>
<div class="t" style="left:-85.0px;width:200px;text-align:right;top:412.0px;height:10px;line-height:10px;font-size:7.4px;color:#1C1C1C;font-weight:normal;letter-spacing:-0.2px;-webkit-text-stroke-width:0.1px">102,900</div>
<div class="t" style="left:-59.0px;width:200px;text-align:right;top:412.0px;height:10px;line-height:10px;font-size:7.4px;color:#1C1C1C;font-weight:normal;letter-spacing:-0.2px;-webkit-text-stroke-width:0.1px">1,240</div>
<div class="t" style="left:-34.0px;width:200px;text-align:right;top:412.0px;height:10px;line-height:10px;font-size:7.4px;color:#1C1C1C;font-weight:normal;letter-spacing:-0.2px;-webkit-text-stroke-width:0.1px">0,350</div>
<div class="t" style="left:-3.0px;width:200px;text-align:right;top:412.0px;height:10px;line-height:10px;font-size:7.4px;color:#1C1C1C;font-weight:normal;letter-spacing:-0.2px;-webkit-text-stroke-width:0.1px">2,676</div>
<div class="t" style="left:38.0px;width:200px;text-align:right;top:412.0px;height:10px;line-height:10px;font-size:7.4px;color:#1C1C1C;font-weight:normal;letter-spacing:-0.2px;-webkit-text-stroke-width:0.1px">44,923</div>
<div class="t" style="left:73.0px;width:200px;text-align:right;top:412.0px;height:10px;line-height:10px;font-size:7.4px;color:#1C1C1C;font-weight:normal;letter-spacing:-0.2px;-webkit-text-stroke-width:0.1px">155,014</div>
<div class="t" style="left:93.5px;width:200px;text-align:right;top:412.0px;height:10px;line-height:10px;font-size:7.4px;color:#1C1C1C;font-weight:normal;letter-spacing:-0.2px;-webkit-text-stroke-width:0.1px">1</div>
<div class="t" style="left:114.0px;width:200px;text-align:right;top:412.0px;height:10px;line-height:10px;font-size:7.4px;color:#1C1C1C;font-weight:normal;letter-spacing:-0.2px;-webkit-text-stroke-width:0.1px">0</div>
<div class="t" style="left:155.0px;width:200px;text-align:right;top:412.0px;height:10px;line-height:10px;font-size:7.4px;color:#1C1C1C;font-weight:normal;letter-spacing:-0.2px;-webkit-text-stroke-width:0.1px">32,272</div>
<div class="t" style="left:190.5px;width:200px;text-align:right;top:412.0px;height:10px;line-height:10px;font-size:7.4px;color:#1C1C1C;font-weight:normal;letter-spacing:-0.2px;-webkit-text-stroke-width:0.1px">8,929</div>
<div class="t" style="left:-129.75px;width:400px;text-align:center;top:422.3px;height:10px;line-height:10px;font-size:8.2px;color:#111;font-weight:bold;">3</div>
<div class="t" style="left:-85.0px;width:200px;text-align:right;top:422.0px;height:10px;line-height:10px;font-size:7.4px;color:#1C1C1C;font-weight:normal;letter-spacing:-0.2px;-webkit-text-stroke-width:0.1px">100,000</div>
<div class="t" style="left:-59.0px;width:200px;text-align:right;top:422.0px;height:10px;line-height:10px;font-size:7.4px;color:#1C1C1C;font-weight:normal;letter-spacing:-0.2px;-webkit-text-stroke-width:0.1px">1,530</div>
<div class="t" style="left:-34.0px;width:200px;text-align:right;top:422.0px;height:10px;line-height:10px;font-size:7.4px;color:#1C1C1C;font-weight:normal;letter-spacing:-0.2px;-webkit-text-stroke-width:0.1px">0,350</div>
<div class="t" style="left:-3.0px;width:200px;text-align:right;top:422.0px;height:10px;line-height:10px;font-size:7.4px;color:#1C1C1C;font-weight:normal;letter-spacing:-0.2px;-webkit-text-stroke-width:0.1px">4,135</div>
<div class="t" style="left:38.0px;width:200px;text-align:right;top:422.0px;height:10px;line-height:10px;font-size:7.4px;color:#1C1C1C;font-weight:normal;letter-spacing:-0.2px;-webkit-text-stroke-width:0.1px">231,881</div>
<div class="t" style="left:73.0px;width:200px;text-align:right;top:422.0px;height:10px;line-height:10px;font-size:7.4px;color:#1C1C1C;font-weight:normal;letter-spacing:-0.2px;-webkit-text-stroke-width:0.1px">114,825</div>
<div class="t" style="left:93.5px;width:200px;text-align:right;top:422.0px;height:10px;line-height:10px;font-size:7.4px;color:#1C1C1C;font-weight:normal;letter-spacing:-0.2px;-webkit-text-stroke-width:0.1px">4</div>
<div class="t" style="left:114.0px;width:200px;text-align:right;top:422.0px;height:10px;line-height:10px;font-size:7.4px;color:#1C1C1C;font-weight:normal;letter-spacing:-0.2px;-webkit-text-stroke-width:0.1px">30</div>
<div class="t" style="left:155.0px;width:200px;text-align:right;top:422.0px;height:10px;line-height:10px;font-size:7.4px;color:#1C1C1C;font-weight:normal;letter-spacing:-0.2px;-webkit-text-stroke-width:0.1px">63,148</div>
<div class="t" style="left:190.5px;width:200px;text-align:right;top:422.0px;height:10px;line-height:10px;font-size:7.4px;color:#1C1C1C;font-weight:normal;letter-spacing:-0.2px;-webkit-text-stroke-width:0.1px">12,854</div>
<div class="t" style="left:60px;top:517.5px;height:10px;line-height:10px;font-size:7.0px;color:#1A1A1A;font-weight:normal;-webkit-text-stroke-width:0.2px;">Número de secciones</div>
<div class="t" style="left:60px;top:531.5px;height:10px;line-height:10px;font-size:7.0px;color:#1A1A1A;font-weight:normal;-webkit-text-stroke-width:0.2px;">Módulo nº :</div>
<div class="inp" style="left:100px;top:530px;width:30px;height:11.5px"></div>
<div class="t" style="left:102px;top:531.05px;height:10px;line-height:10px;font-size:7.2px;color:#1A1A1A;font-weight:normal;-webkit-text-stroke-width:0.2px;">1</div>
<div class="btn" style="left:272px;top:527.5px;width:43.5px;height:14.0px"></div>
<div class="t" style="left:94.80000000000001px;width:400px;text-align:center;top:529.7px;height:10px;line-height:10px;font-size:7.0px;color:#1A1A1A;font-weight:normal;-webkit-text-stroke-width:0.2px;">Ayuda</div>
<div class="btn" style="left:318.7px;top:527.5px;width:41.30000000000001px;height:14.0px"></div>
<div class="t" style="left:139.35000000000002px;width:400px;text-align:center;top:529.7px;height:10px;line-height:10px;font-size:7.0px;color:#1A1A1A;font-weight:normal;-webkit-text-stroke-width:0.2px;">Calcular</div>
<div class="btn def" style="left:362.5px;top:527.5px;width:41.0px;height:14.0px"></div>
<div class="t" style="left:183.0px;width:400px;text-align:center;top:529.7px;height:10px;line-height:10px;font-size:7.0px;color:#1A1A1A;font-weight:normal;-webkit-text-stroke-width:0.2px;">Salir</div>
<div class="prog" style="left:60px;top:545.5px;width:343.5px;height:5.0px"></div>
<div class="btn" style="left:60px;top:553.5px;width:100px;height:9.5px"></div>
<div class="t" style="left:-117px;width:400px;text-align:center;top:553.5px;height:10px;line-height:10px;font-size:7.0px;color:#1A1A1A;font-weight:normal;-webkit-text-stroke-width:0.2px;">&lt;&lt;</div>
<div class="t" style="left:101px;top:553.5px;height:10px;line-height:10px;font-size:7.0px;color:#1A1A1A;font-weight:normal;-webkit-text-stroke-width:0.2px;">Anterior</div>
<div class="btn" style="left:321.5px;top:553.5px;width:82.0px;height:9.0px"></div>
<div class="t" style="left:339px;top:553.5px;height:10px;line-height:10px;font-size:7.0px;color:#1A1A1A;font-weight:normal;-webkit-text-stroke-width:0.2px;">Siguiente</div>
<div class="t" style="left:182px;width:400px;text-align:center;top:553.5px;height:10px;line-height:10px;font-size:7.0px;color:#1A1A1A;font-weight:normal;-webkit-text-stroke-width:0.2px;">&gt;&gt;</div>
<div style="left:414px;top:354.5px;width:363.5px;height:245.5px;background:#728EE6;border-radius:4px 4px 0 0"></div>
<div style="left:414px;top:354.5px;width:363.5px;height:18px;background:linear-gradient(#AAC4F4 0%,#8AA8EB 10%,#7896E0 25%,#7796E0 50%,#7CA1E7 78%,#80A8EA 88%,#6A8AE2 100%);border-radius:4px 4px 0 0;border:1px solid #728EE6;border-bottom:none"></div>
<div class="t" style="left:419px;top:359.8px;height:10px;line-height:10px;font-size:8.5px;color:#E6EDFB;font-weight:bold;letter-spacing:-0.2px">Cálculo del panel</div>
<div style="left:761.8px;top:358.0px;width:12.5px;height:12.5px;border-radius:2px;border:1px solid #B5C6F0;background:linear-gradient(#D392A4,#BE7187)"></div>
<svg style="left:761.8px;top:358.0px" width="13" height="13"><path d="M3.5 3.5 L9 9 M9 3.5 L3.5 9" stroke="#fff" stroke-width="1.5"/></svg>
<div style="left:416px;top:372px;width:359.5px;height:226px;background:#ECE9D8"></div>
<div class="t" style="left:423.5px;top:390.0px;height:10px;line-height:10px;font-size:7.0px;color:#1A1A1A;font-weight:normal;-webkit-text-stroke-width:0.2px;">Módulo nº :</div>
<div class="inp" style="left:462.5px;top:387.5px;width:21.0px;height:13.0px"></div>
<div class="t" style="left:464.5px;top:389.3px;height:10px;line-height:10px;font-size:7.2px;color:#1A1A1A;font-weight:normal;-webkit-text-stroke-width:0.2px;">1</div>
<div style="left:486px;top:383.5px;width:159.5px;height:21px;background:#ECE9D8;border:1px solid;border-color:#FFFFFF #9E9B8C #9E9B8C #FFFFFF"></div>
<div class="t" style="left:365.75px;width:400px;text-align:center;top:389.2px;height:10px;line-height:10px;font-size:7.1px;color:#1A1A1A;font-weight:normal;-webkit-text-stroke-width:0.2px;letter-spacing:-0.25px">FLEXION EJE VERTICAL</div>
<div style="left:647.5px;top:383.5px;width:122px;height:21px;background:#ECE9D8;border:1px solid;border-color:#FFFFFF #9E9B8C #9E9B8C #FFFFFF"></div>
<div class="t" style="left:508.5px;width:400px;text-align:center;top:389.2px;height:10px;line-height:10px;font-size:7.1px;color:#1A1A1A;font-weight:normal;-webkit-text-stroke-width:0.2px;letter-spacing:-0.25px">FLEXION EJE HORIZONTAL</div>
<div style="left:423.5px;top:405px;width:346.5px;height:131px;background:#C0C0C0"></div>
<svg style="left:0;top:0" width="800" height="640"><rect x="423.5" y="405" width="20.5" height="20" fill="#ECE9D8"/><path d="M424.5 424.5 V406 H443" stroke="#FFFFFF" stroke-width="1" fill="none"/><rect x="444" y="405" width="40.5" height="20" fill="#ECE9D8"/><path d="M445 424.5 V406 H483.5" stroke="#FFFFFF" stroke-width="1" fill="none"/><rect x="484.5" y="405" width="40.5" height="20" fill="#ECE9D8"/><path d="M485.5 424.5 V406 H524" stroke="#FFFFFF" stroke-width="1" fill="none"/><rect x="525" y="405" width="40.75" height="20" fill="#ECE9D8"/><path d="M526 424.5 V406 H564.75" stroke="#FFFFFF" stroke-width="1" fill="none"/><rect x="565.75" y="405" width="40.75" height="20" fill="#ECE9D8"/><path d="M566.75 424.5 V406 H605.5" stroke="#FFFFFF" stroke-width="1" fill="none"/><rect x="606.5" y="405" width="40.0" height="20" fill="#ECE9D8"/><path d="M607.5 424.5 V406 H645.5" stroke="#FFFFFF" stroke-width="1" fill="none"/><rect x="646.5" y="405" width="41.0" height="20" fill="#ECE9D8"/><path d="M647.5 424.5 V406 H686.5" stroke="#FFFFFF" stroke-width="1" fill="none"/><rect x="687.5" y="405" width="40.5" height="20" fill="#ECE9D8"/><path d="M688.5 424.5 V406 H727" stroke="#FFFFFF" stroke-width="1" fill="none"/><rect x="728" y="405" width="41" height="20" fill="#ECE9D8"/><path d="M729 424.5 V406 H768" stroke="#FFFFFF" stroke-width="1" fill="none"/><rect x="423.5" y="425" width="20.5" height="10" fill="#ECE9D8"/><path d="M424.5 434.5 V426 H443" stroke="#FFFFFF" stroke-width="1" fill="none"/><path d="M423.5 434.5 H444" stroke="#404040" stroke-width="1"/><rect x="423.5" y="435" width="20.5" height="10" fill="#ECE9D8"/><path d="M424.5 444.5 V436 H443" stroke="#FFFFFF" stroke-width="1" fill="none"/><path d="M423.5 444.5 H444" stroke="#404040" stroke-width="1"/><rect x="423.5" y="445" width="20.5" height="10" fill="#ECE9D8"/><path d="M424.5 454.5 V446 H443" stroke="#FFFFFF" stroke-width="1" fill="none"/><path d="M423.5 454.5 H444" stroke="#404040" stroke-width="1"/><rect x="423.5" y="455" width="20.5" height="10" fill="#ECE9D8"/><path d="M424.5 464.5 V456 H443" stroke="#FFFFFF" stroke-width="1" fill="none"/><path d="M423.5 464.5 H444" stroke="#404040" stroke-width="1"/><rect x="423.5" y="465" width="20.5" height="10" fill="#ECE9D8"/><path d="M424.5 474.5 V466 H443" stroke="#FFFFFF" stroke-width="1" fill="none"/><path d="M423.5 474.5 H444" stroke="#404040" stroke-width="1"/><rect x="423.5" y="475" width="20.5" height="10" fill="#ECE9D8"/><path d="M424.5 484.5 V476 H443" stroke="#FFFFFF" stroke-width="1" fill="none"/><path d="M423.5 484.5 H444" stroke="#404040" stroke-width="1"/><rect x="423.5" y="485" width="20.5" height="10" fill="#ECE9D8"/><path d="M424.5 494.5 V486 H443" stroke="#FFFFFF" stroke-width="1" fill="none"/><path d="M423.5 494.5 H444" stroke="#404040" stroke-width="1"/><rect x="423.5" y="495" width="20.5" height="10" fill="#ECE9D8"/><path d="M424.5 504.5 V496 H443" stroke="#FFFFFF" stroke-width="1" fill="none"/><path d="M423.5 504.5 H444" stroke="#404040" stroke-width="1"/><rect x="423.5" y="505" width="20.5" height="10" fill="#ECE9D8"/><path d="M424.5 514.5 V506 H443" stroke="#FFFFFF" stroke-width="1" fill="none"/><path d="M423.5 514.5 H444" stroke="#404040" stroke-width="1"/><rect x="423.5" y="515" width="20.5" height="10" fill="#ECE9D8"/><path d="M424.5 524.5 V516 H443" stroke="#FFFFFF" stroke-width="1" fill="none"/><path d="M423.5 524.5 H444" stroke="#404040" stroke-width="1"/><rect x="423.5" y="525" width="20.5" height="10" fill="#ECE9D8"/><path d="M424.5 534.5 V526 H443" stroke="#FFFFFF" stroke-width="1" fill="none"/><path d="M423.5 534.5 H444" stroke="#404040" stroke-width="1"/><rect x="444" y="425" width="325" height="110" fill="#FFFFFF"/><path d="M444 434.5 H769" stroke="#D4D0C8" stroke-width="1"/><path d="M444 444.5 H769" stroke="#D4D0C8" stroke-width="1"/><path d="M444 454.5 H769" stroke="#D4D0C8" stroke-width="1"/><path d="M444 464.5 H769" stroke="#D4D0C8" stroke-width="1"/><path d="M444 474.5 H769" stroke="#D4D0C8" stroke-width="1"/><path d="M444 484.5 H769" stroke="#D4D0C8" stroke-width="1"/><path d="M444 494.5 H769" stroke="#D4D0C8" stroke-width="1"/><path d="M444 504.5 H769" stroke="#D4D0C8" stroke-width="1"/><path d="M444 514.5 H769" stroke="#D4D0C8" stroke-width="1"/><path d="M444 524.5 H769" stroke="#D4D0C8" stroke-width="1"/><path d="M444 534.5 H769" stroke="#D4D0C8" stroke-width="1"/><path d="M484.5 425 V535" stroke="#D4D0C8" stroke-width="1"/><path d="M524.5 425 V535" stroke="#D4D0C8" stroke-width="1"/><path d="M565.5 425 V535" stroke="#D4D0C8" stroke-width="1"/><path d="M606.5 425 V535" stroke="#D4D0C8" stroke-width="1"/><path d="M646.5 425 V535" stroke="#D4D0C8" stroke-width="1"/><path d="M687.5 425 V535" stroke="#D4D0C8" stroke-width="1"/><path d="M727.5 425 V535" stroke="#D4D0C8" stroke-width="1"/><path d="M768.5 425 V535" stroke="#D4D0C8" stroke-width="1"/><path d="M443.5 405 V425" stroke="#404040" stroke-width="1"/><path d="M484.5 405 V425" stroke="#404040" stroke-width="1"/><path d="M524.5 405 V425" stroke="#404040" stroke-width="1"/><path d="M565.5 405 V425" stroke="#404040" stroke-width="1"/><path d="M606.5 405 V425" stroke="#404040" stroke-width="1"/><path d="M646.5 405 V425" stroke="#404040" stroke-width="1"/><path d="M687.5 405 V425" stroke="#404040" stroke-width="1"/><path d="M727.5 405 V425" stroke="#404040" stroke-width="1"/><path d="M768.5 405 V425" stroke="#404040" stroke-width="1"/><path d="M443.5 425 V535" stroke="#404040" stroke-width="1"/><path d="M423.5 424.5 H769" stroke="#404040" stroke-width="1"/><path d="M424.0 535 V405.5 H769" stroke="#404040" stroke-width="1" fill="none"/><path d="M423.5 535.5 H769.5" stroke="#404040" stroke-width="1.5"/><path d="M769.5 405 V536" stroke="#404040" stroke-width="1.5"/><rect x="728.5" y="525.5" width="40" height="9" stroke="#000" stroke-width="1.3" fill="none"/></svg>
<div class="t" style="left:264.25px;width:400px;text-align:center;top:410.5px;height:10px;line-height:10px;font-size:7.6px;color:#111;font-weight:bold;">Cota (m)</div>
<div class="t" style="left:304.75px;width:400px;text-align:center;top:406.2px;height:10px;line-height:10px;font-size:7.6px;color:#111;font-weight:bold;">Mvano</div>
<div class="t" style="left:304.75px;width:400px;text-align:center;top:414.3px;height:10px;line-height:10px;font-size:7.6px;color:#111;font-weight:bold;">(mT/m)</div>
<div class="t" style="left:345.375px;width:400px;text-align:center;top:406.2px;height:10px;line-height:10px;font-size:7.6px;color:#111;font-weight:bold;">Mapoyo</div>
<div class="t" style="left:345.375px;width:400px;text-align:center;top:414.3px;height:10px;line-height:10px;font-size:7.6px;color:#111;font-weight:bold;">(mT/m)</div>
<div class="t" style="left:386.125px;width:400px;text-align:center;top:406.2px;height:10px;line-height:10px;font-size:7.6px;color:#111;font-weight:bold;">Aext</div>
<div class="t" style="left:386.125px;width:400px;text-align:center;top:414.3px;height:10px;line-height:10px;font-size:7.6px;color:#111;font-weight:bold;">(cm2/m)</div>
<div class="t" style="left:426.5px;width:400px;text-align:center;top:406.2px;height:10px;line-height:10px;font-size:7.6px;color:#111;font-weight:bold;">Aint</div>
<div class="t" style="left:426.5px;width:400px;text-align:center;top:414.3px;height:10px;line-height:10px;font-size:7.6px;color:#111;font-weight:bold;">(cm2/m)</div>
<div class="t" style="left:467.0px;width:400px;text-align:center;top:406.2px;height:10px;line-height:10px;font-size:7.6px;color:#111;font-weight:bold;">Mh</div>
<div class="t" style="left:467.0px;width:400px;text-align:center;top:414.3px;height:10px;line-height:10px;font-size:7.6px;color:#111;font-weight:bold;">(mT/m)</div>
<div class="t" style="left:507.75px;width:400px;text-align:center;top:406.2px;height:10px;line-height:10px;font-size:7.6px;color:#111;font-weight:bold;">Aext</div>
<div class="t" style="left:507.75px;width:400px;text-align:center;top:414.3px;height:10px;line-height:10px;font-size:7.6px;color:#111;font-weight:bold;">(cm2/m)</div>
<div class="t" style="left:548.5px;width:400px;text-align:center;top:406.2px;height:10px;line-height:10px;font-size:7.6px;color:#111;font-weight:bold;">Aint</div>
<div class="t" style="left:548.5px;width:400px;text-align:center;top:414.3px;height:10px;line-height:10px;font-size:7.6px;color:#111;font-weight:bold;">(cm2/m)</div>
<div class="t" style="left:233.75px;width:400px;text-align:center;top:425.8px;height:10px;line-height:10px;font-size:8.2px;color:#111;font-weight:bold;">1</div>
<div class="t" style="left:283.0px;width:200px;text-align:right;top:425.5px;height:10px;line-height:10px;font-size:7.4px;color:#1C1C1C;font-weight:normal;letter-spacing:-0.2px;-webkit-text-stroke-width:0.1px">105,800</div>
<div class="t" style="left:323.5px;width:200px;text-align:right;top:425.5px;height:10px;line-height:10px;font-size:7.4px;color:#1C1C1C;font-weight:normal;letter-spacing:-0.2px;-webkit-text-stroke-width:0.1px">2,143</div>
<div class="t" style="left:364.25px;width:200px;text-align:right;top:425.5px;height:10px;line-height:10px;font-size:7.4px;color:#1C1C1C;font-weight:normal;letter-spacing:-0.2px;-webkit-text-stroke-width:0.1px">2,195</div>
<div class="t" style="left:405.0px;width:200px;text-align:right;top:425.5px;height:10px;line-height:10px;font-size:7.4px;color:#1C1C1C;font-weight:normal;letter-spacing:-0.2px;-webkit-text-stroke-width:0.1px">1,624</div>
<div class="t" style="left:445.0px;width:200px;text-align:right;top:425.5px;height:10px;line-height:10px;font-size:7.4px;color:#1C1C1C;font-weight:normal;letter-spacing:-0.2px;-webkit-text-stroke-width:0.1px">1,664</div>
<div class="t" style="left:486.0px;width:200px;text-align:right;top:425.5px;height:10px;line-height:10px;font-size:7.4px;color:#1C1C1C;font-weight:normal;letter-spacing:-0.2px;-webkit-text-stroke-width:0.1px">0,073</div>
<div class="t" style="left:526.5px;width:200px;text-align:right;top:425.5px;height:10px;line-height:10px;font-size:7.4px;color:#1C1C1C;font-weight:normal;letter-spacing:-0.2px;-webkit-text-stroke-width:0.1px">0,048</div>
<div class="t" style="left:567.5px;width:200px;text-align:right;top:425.5px;height:10px;line-height:10px;font-size:7.4px;color:#1C1C1C;font-weight:normal;letter-spacing:-0.2px;-webkit-text-stroke-width:0.1px">0,000</div>
<div class="t" style="left:233.75px;width:400px;text-align:center;top:435.8px;height:10px;line-height:10px;font-size:8.2px;color:#111;font-weight:bold;">2</div>
<div class="t" style="left:283.0px;width:200px;text-align:right;top:435.5px;height:10px;line-height:10px;font-size:7.4px;color:#1C1C1C;font-weight:normal;letter-spacing:-0.2px;-webkit-text-stroke-width:0.1px">105,220</div>
<div class="t" style="left:323.5px;width:200px;text-align:right;top:435.5px;height:10px;line-height:10px;font-size:7.4px;color:#1C1C1C;font-weight:normal;letter-spacing:-0.2px;-webkit-text-stroke-width:0.1px">2,143</div>
<div class="t" style="left:364.25px;width:200px;text-align:right;top:435.5px;height:10px;line-height:10px;font-size:7.4px;color:#1C1C1C;font-weight:normal;letter-spacing:-0.2px;-webkit-text-stroke-width:0.1px">2,720</div>
<div class="t" style="left:405.0px;width:200px;text-align:right;top:435.5px;height:10px;line-height:10px;font-size:7.4px;color:#1C1C1C;font-weight:normal;letter-spacing:-0.2px;-webkit-text-stroke-width:0.1px">1,624</div>
<div class="t" style="left:445.0px;width:200px;text-align:right;top:435.5px;height:10px;line-height:10px;font-size:7.4px;color:#1C1C1C;font-weight:normal;letter-spacing:-0.2px;-webkit-text-stroke-width:0.1px">2,067</div>
<div class="t" style="left:486.0px;width:200px;text-align:right;top:435.5px;height:10px;line-height:10px;font-size:7.4px;color:#1C1C1C;font-weight:normal;letter-spacing:-0.2px;-webkit-text-stroke-width:0.1px">0,406</div>
<div class="t" style="left:526.5px;width:200px;text-align:right;top:435.5px;height:10px;line-height:10px;font-size:7.4px;color:#1C1C1C;font-weight:normal;letter-spacing:-0.2px;-webkit-text-stroke-width:0.1px">0,306</div>
<div class="t" style="left:567.5px;width:200px;text-align:right;top:435.5px;height:10px;line-height:10px;font-size:7.4px;color:#1C1C1C;font-weight:normal;letter-spacing:-0.2px;-webkit-text-stroke-width:0.1px">0,000</div>
<div class="t" style="left:233.75px;width:400px;text-align:center;top:445.8px;height:10px;line-height:10px;font-size:8.2px;color:#111;font-weight:bold;">3</div>
<div class="t" style="left:283.0px;width:200px;text-align:right;top:445.5px;height:10px;line-height:10px;font-size:7.4px;color:#1C1C1C;font-weight:normal;letter-spacing:-0.2px;-webkit-text-stroke-width:0.1px">104,640</div>
<div class="t" style="left:323.5px;width:200px;text-align:right;top:445.5px;height:10px;line-height:10px;font-size:7.4px;color:#1C1C1C;font-weight:normal;letter-spacing:-0.2px;-webkit-text-stroke-width:0.1px">2,143</div>
<div class="t" style="left:364.25px;width:200px;text-align:right;top:445.5px;height:10px;line-height:10px;font-size:7.4px;color:#1C1C1C;font-weight:normal;letter-spacing:-0.2px;-webkit-text-stroke-width:0.1px">3,246</div>
<div class="t" style="left:405.0px;width:200px;text-align:right;top:445.5px;height:10px;line-height:10px;font-size:7.4px;color:#1C1C1C;font-weight:normal;letter-spacing:-0.2px;-webkit-text-stroke-width:0.1px">1,624</div>
<div class="t" style="left:445.0px;width:200px;text-align:right;top:445.5px;height:10px;line-height:10px;font-size:7.4px;color:#1C1C1C;font-weight:normal;letter-spacing:-0.2px;-webkit-text-stroke-width:0.1px">2,472</div>
<div class="t" style="left:486.0px;width:200px;text-align:right;top:445.5px;height:10px;line-height:10px;font-size:7.4px;color:#1C1C1C;font-weight:normal;letter-spacing:-0.2px;-webkit-text-stroke-width:0.1px">0,651</div>
<div class="t" style="left:526.5px;width:200px;text-align:right;top:445.5px;height:10px;line-height:10px;font-size:7.4px;color:#1C1C1C;font-weight:normal;letter-spacing:-0.2px;-webkit-text-stroke-width:0.1px">0,491</div>
<div class="t" style="left:567.5px;width:200px;text-align:right;top:445.5px;height:10px;line-height:10px;font-size:7.4px;color:#1C1C1C;font-weight:normal;letter-spacing:-0.2px;-webkit-text-stroke-width:0.1px">0,000</div>
<div class="t" style="left:233.75px;width:400px;text-align:center;top:455.8px;height:10px;line-height:10px;font-size:8.2px;color:#111;font-weight:bold;">4</div>
<div class="t" style="left:283.0px;width:200px;text-align:right;top:455.5px;height:10px;line-height:10px;font-size:7.4px;color:#1C1C1C;font-weight:normal;letter-spacing:-0.2px;-webkit-text-stroke-width:0.1px">104,060</div>
<div class="t" style="left:323.5px;width:200px;text-align:right;top:455.5px;height:10px;line-height:10px;font-size:7.4px;color:#1C1C1C;font-weight:normal;letter-spacing:-0.2px;-webkit-text-stroke-width:0.1px">2,143</div>
<div class="t" style="left:364.25px;width:200px;text-align:right;top:455.5px;height:10px;line-height:10px;font-size:7.4px;color:#1C1C1C;font-weight:normal;letter-spacing:-0.2px;-webkit-text-stroke-width:0.1px">3,772</div>
<div class="t" style="left:405.0px;width:200px;text-align:right;top:455.5px;height:10px;line-height:10px;font-size:7.4px;color:#1C1C1C;font-weight:normal;letter-spacing:-0.2px;-webkit-text-stroke-width:0.1px">1,624</div>
<div class="t" style="left:445.0px;width:200px;text-align:right;top:455.5px;height:10px;line-height:10px;font-size:7.4px;color:#1C1C1C;font-weight:normal;letter-spacing:-0.2px;-webkit-text-stroke-width:0.1px">2,878</div>
<div class="t" style="left:486.0px;width:200px;text-align:right;top:455.5px;height:10px;line-height:10px;font-size:7.4px;color:#1C1C1C;font-weight:normal;letter-spacing:-0.2px;-webkit-text-stroke-width:0.1px">0,848</div>
<div class="t" style="left:526.5px;width:200px;text-align:right;top:455.5px;height:10px;line-height:10px;font-size:7.4px;color:#1C1C1C;font-weight:normal;letter-spacing:-0.2px;-webkit-text-stroke-width:0.1px">0,639</div>
<div class="t" style="left:567.5px;width:200px;text-align:right;top:455.5px;height:10px;line-height:10px;font-size:7.4px;color:#1C1C1C;font-weight:normal;letter-spacing:-0.2px;-webkit-text-stroke-width:0.1px">0,000</div>
<div class="t" style="left:233.75px;width:400px;text-align:center;top:465.8px;height:10px;line-height:10px;font-size:8.2px;color:#111;font-weight:bold;">5</div>
<div class="t" style="left:283.0px;width:200px;text-align:right;top:465.5px;height:10px;line-height:10px;font-size:7.4px;color:#1C1C1C;font-weight:normal;letter-spacing:-0.2px;-webkit-text-stroke-width:0.1px">103,480</div>
<div class="t" style="left:323.5px;width:200px;text-align:right;top:465.5px;height:10px;line-height:10px;font-size:7.4px;color:#1C1C1C;font-weight:normal;letter-spacing:-0.2px;-webkit-text-stroke-width:0.1px">2,143</div>
<div class="t" style="left:364.25px;width:200px;text-align:right;top:465.5px;height:10px;line-height:10px;font-size:7.4px;color:#1C1C1C;font-weight:normal;letter-spacing:-0.2px;-webkit-text-stroke-width:0.1px">3,826</div>
<div class="t" style="left:405.0px;width:200px;text-align:right;top:465.5px;height:10px;line-height:10px;font-size:7.4px;color:#1C1C1C;font-weight:normal;letter-spacing:-0.2px;-webkit-text-stroke-width:0.1px">1,624</div>
<div class="t" style="left:445.0px;width:200px;text-align:right;top:465.5px;height:10px;line-height:10px;font-size:7.4px;color:#1C1C1C;font-weight:normal;letter-spacing:-0.2px;-webkit-text-stroke-width:0.1px">2,920</div>
<div class="t" style="left:486.0px;width:200px;text-align:right;top:465.5px;height:10px;line-height:10px;font-size:7.4px;color:#1C1C1C;font-weight:normal;letter-spacing:-0.2px;-webkit-text-stroke-width:0.1px">0,996</div>
<div class="t" style="left:526.5px;width:200px;text-align:right;top:465.5px;height:10px;line-height:10px;font-size:7.4px;color:#1C1C1C;font-weight:normal;letter-spacing:-0.2px;-webkit-text-stroke-width:0.1px">0,751</div>
<div class="t" style="left:567.5px;width:200px;text-align:right;top:465.5px;height:10px;line-height:10px;font-size:7.4px;color:#1C1C1C;font-weight:normal;letter-spacing:-0.2px;-webkit-text-stroke-width:0.1px">0,000</div>
<div class="t" style="left:233.75px;width:400px;text-align:center;top:475.8px;height:10px;line-height:10px;font-size:8.2px;color:#111;font-weight:bold;">6</div>
<div class="t" style="left:283.0px;width:200px;text-align:right;top:475.5px;height:10px;line-height:10px;font-size:7.4px;color:#1C1C1C;font-weight:normal;letter-spacing:-0.2px;-webkit-text-stroke-width:0.1px">102,900</div>
<div class="t" style="left:323.5px;width:200px;text-align:right;top:475.5px;height:10px;line-height:10px;font-size:7.4px;color:#1C1C1C;font-weight:normal;letter-spacing:-0.2px;-webkit-text-stroke-width:0.1px">2,143</div>
<div class="t" style="left:364.25px;width:200px;text-align:right;top:475.5px;height:10px;line-height:10px;font-size:7.4px;color:#1C1C1C;font-weight:normal;letter-spacing:-0.2px;-webkit-text-stroke-width:0.1px">3,826</div>
<div class="t" style="left:405.0px;width:200px;text-align:right;top:475.5px;height:10px;line-height:10px;font-size:7.4px;color:#1C1C1C;font-weight:normal;letter-spacing:-0.2px;-webkit-text-stroke-width:0.1px">1,624</div>
<div class="t" style="left:445.0px;width:200px;text-align:right;top:475.5px;height:10px;line-height:10px;font-size:7.4px;color:#1C1C1C;font-weight:normal;letter-spacing:-0.2px;-webkit-text-stroke-width:0.1px">2,920</div>
<div class="t" style="left:486.0px;width:200px;text-align:right;top:475.5px;height:10px;line-height:10px;font-size:7.4px;color:#1C1C1C;font-weight:normal;letter-spacing:-0.2px;-webkit-text-stroke-width:0.1px">1,095</div>
<div class="t" style="left:526.5px;width:200px;text-align:right;top:475.5px;height:10px;line-height:10px;font-size:7.4px;color:#1C1C1C;font-weight:normal;letter-spacing:-0.2px;-webkit-text-stroke-width:0.1px">0,827</div>
<div class="t" style="left:567.5px;width:200px;text-align:right;top:475.5px;height:10px;line-height:10px;font-size:7.4px;color:#1C1C1C;font-weight:normal;letter-spacing:-0.2px;-webkit-text-stroke-width:0.1px">0,000</div>
<div class="t" style="left:233.75px;width:400px;text-align:center;top:485.8px;height:10px;line-height:10px;font-size:8.2px;color:#111;font-weight:bold;">7</div>
<div class="t" style="left:283.0px;width:200px;text-align:right;top:485.5px;height:10px;line-height:10px;font-size:7.4px;color:#1C1C1C;font-weight:normal;letter-spacing:-0.2px;-webkit-text-stroke-width:0.1px">102,320</div>
<div class="t" style="left:323.5px;width:200px;text-align:right;top:485.5px;height:10px;line-height:10px;font-size:7.4px;color:#1C1C1C;font-weight:normal;letter-spacing:-0.2px;-webkit-text-stroke-width:0.1px">2,143</div>
<div class="t" style="left:364.25px;width:200px;text-align:right;top:485.5px;height:10px;line-height:10px;font-size:7.4px;color:#1C1C1C;font-weight:normal;letter-spacing:-0.2px;-webkit-text-stroke-width:0.1px">3,826</div>
<div class="t" style="left:405.0px;width:200px;text-align:right;top:485.5px;height:10px;line-height:10px;font-size:7.4px;color:#1C1C1C;font-weight:normal;letter-spacing:-0.2px;-webkit-text-stroke-width:0.1px">1,624</div>
<div class="t" style="left:445.0px;width:200px;text-align:right;top:485.5px;height:10px;line-height:10px;font-size:7.4px;color:#1C1C1C;font-weight:normal;letter-spacing:-0.2px;-webkit-text-stroke-width:0.1px">2,920</div>
<div class="t" style="left:486.0px;width:200px;text-align:right;top:485.5px;height:10px;line-height:10px;font-size:7.4px;color:#1C1C1C;font-weight:normal;letter-spacing:-0.2px;-webkit-text-stroke-width:0.1px">1,146</div>
<div class="t" style="left:526.5px;width:200px;text-align:right;top:485.5px;height:10px;line-height:10px;font-size:7.4px;color:#1C1C1C;font-weight:normal;letter-spacing:-0.2px;-webkit-text-stroke-width:0.1px">0,865</div>
<div class="t" style="left:567.5px;width:200px;text-align:right;top:485.5px;height:10px;line-height:10px;font-size:7.4px;color:#1C1C1C;font-weight:normal;letter-spacing:-0.2px;-webkit-text-stroke-width:0.1px">0,000</div>
<div class="t" style="left:233.75px;width:400px;text-align:center;top:495.8px;height:10px;line-height:10px;font-size:8.2px;color:#111;font-weight:bold;">8</div>
<div class="t" style="left:283.0px;width:200px;text-align:right;top:495.5px;height:10px;line-height:10px;font-size:7.4px;color:#1C1C1C;font-weight:normal;letter-spacing:-0.2px;-webkit-text-stroke-width:0.1px">101,740</div>
<div class="t" style="left:323.5px;width:200px;text-align:right;top:495.5px;height:10px;line-height:10px;font-size:7.4px;color:#1C1C1C;font-weight:normal;letter-spacing:-0.2px;-webkit-text-stroke-width:0.1px">1,879</div>
<div class="t" style="left:364.25px;width:200px;text-align:right;top:495.5px;height:10px;line-height:10px;font-size:7.4px;color:#1C1C1C;font-weight:normal;letter-spacing:-0.2px;-webkit-text-stroke-width:0.1px">3,355</div>
<div class="t" style="left:405.0px;width:200px;text-align:right;top:495.5px;height:10px;line-height:10px;font-size:7.4px;color:#1C1C1C;font-weight:normal;letter-spacing:-0.2px;-webkit-text-stroke-width:0.1px">1,423</div>
<div class="t" style="left:445.0px;width:200px;text-align:right;top:495.5px;height:10px;line-height:10px;font-size:7.4px;color:#1C1C1C;font-weight:normal;letter-spacing:-0.2px;-webkit-text-stroke-width:0.1px">2,556</div>
<div class="t" style="left:486.0px;width:200px;text-align:right;top:495.5px;height:10px;line-height:10px;font-size:7.4px;color:#1C1C1C;font-weight:normal;letter-spacing:-0.2px;-webkit-text-stroke-width:0.1px">1,056</div>
<div class="t" style="left:526.5px;width:200px;text-align:right;top:495.5px;height:10px;line-height:10px;font-size:7.4px;color:#1C1C1C;font-weight:normal;letter-spacing:-0.2px;-webkit-text-stroke-width:0.1px">0,797</div>
<div class="t" style="left:567.5px;width:200px;text-align:right;top:495.5px;height:10px;line-height:10px;font-size:7.4px;color:#1C1C1C;font-weight:normal;letter-spacing:-0.2px;-webkit-text-stroke-width:0.1px">0,000</div>
<div class="t" style="left:233.75px;width:400px;text-align:center;top:505.8px;height:10px;line-height:10px;font-size:8.2px;color:#111;font-weight:bold;">9</div>
<div class="t" style="left:283.0px;width:200px;text-align:right;top:505.5px;height:10px;line-height:10px;font-size:7.4px;color:#1C1C1C;font-weight:normal;letter-spacing:-0.2px;-webkit-text-stroke-width:0.1px">101,160</div>
<div class="t" style="left:323.5px;width:200px;text-align:right;top:505.5px;height:10px;line-height:10px;font-size:7.4px;color:#1C1C1C;font-weight:normal;letter-spacing:-0.2px;-webkit-text-stroke-width:0.1px">1,290</div>
<div class="t" style="left:364.25px;width:200px;text-align:right;top:505.5px;height:10px;line-height:10px;font-size:7.4px;color:#1C1C1C;font-weight:normal;letter-spacing:-0.2px;-webkit-text-stroke-width:0.1px">2,304</div>
<div class="t" style="left:405.0px;width:200px;text-align:right;top:505.5px;height:10px;line-height:10px;font-size:7.4px;color:#1C1C1C;font-weight:normal;letter-spacing:-0.2px;-webkit-text-stroke-width:0.1px">0,975</div>
<div class="t" style="left:445.0px;width:200px;text-align:right;top:505.5px;height:10px;line-height:10px;font-size:7.4px;color:#1C1C1C;font-weight:normal;letter-spacing:-0.2px;-webkit-text-stroke-width:0.1px">1,747</div>
<div class="t" style="left:486.0px;width:200px;text-align:right;top:505.5px;height:10px;line-height:10px;font-size:7.4px;color:#1C1C1C;font-weight:normal;letter-spacing:-0.2px;-webkit-text-stroke-width:0.1px">0,136</div>
<div class="t" style="left:526.5px;width:200px;text-align:right;top:505.5px;height:10px;line-height:10px;font-size:7.4px;color:#1C1C1C;font-weight:normal;letter-spacing:-0.2px;-webkit-text-stroke-width:0.1px">0,102</div>
<div class="t" style="left:567.5px;width:200px;text-align:right;top:505.5px;height:10px;line-height:10px;font-size:7.4px;color:#1C1C1C;font-weight:normal;letter-spacing:-0.2px;-webkit-text-stroke-width:0.1px">0,000</div>
<div class="t" style="left:233.75px;width:400px;text-align:center;top:515.8px;height:10px;line-height:10px;font-size:8.2px;color:#111;font-weight:bold;">10</div>
<div class="t" style="left:283.0px;width:200px;text-align:right;top:515.5px;height:10px;line-height:10px;font-size:7.4px;color:#1C1C1C;font-weight:normal;letter-spacing:-0.2px;-webkit-text-stroke-width:0.1px">100,580</div>
<div class="t" style="left:323.5px;width:200px;text-align:right;top:515.5px;height:10px;line-height:10px;font-size:7.4px;color:#1C1C1C;font-weight:normal;letter-spacing:-0.2px;-webkit-text-stroke-width:0.1px">0,701</div>
<div class="t" style="left:364.25px;width:200px;text-align:right;top:515.5px;height:10px;line-height:10px;font-size:7.4px;color:#1C1C1C;font-weight:normal;letter-spacing:-0.2px;-webkit-text-stroke-width:0.1px">1,252</div>
<div class="t" style="left:405.0px;width:200px;text-align:right;top:515.5px;height:10px;line-height:10px;font-size:7.4px;color:#1C1C1C;font-weight:normal;letter-spacing:-0.2px;-webkit-text-stroke-width:0.1px">0,529</div>
<div class="t" style="left:445.0px;width:200px;text-align:right;top:515.5px;height:10px;line-height:10px;font-size:7.4px;color:#1C1C1C;font-weight:normal;letter-spacing:-0.2px;-webkit-text-stroke-width:0.1px">0,946</div>
<div class="t" style="left:486.0px;width:200px;text-align:right;top:515.5px;height:10px;line-height:10px;font-size:7.4px;color:#1C1C1C;font-weight:normal;letter-spacing:-0.2px;-webkit-text-stroke-width:0.1px">-1,754</div>
<div class="t" style="left:526.5px;width:200px;text-align:right;top:515.5px;height:10px;line-height:10px;font-size:7.4px;color:#1C1C1C;font-weight:normal;letter-spacing:-0.2px;-webkit-text-stroke-width:0.1px">0,000</div>
<div class="t" style="left:567.5px;width:200px;text-align:right;top:515.5px;height:10px;line-height:10px;font-size:7.4px;color:#1C1C1C;font-weight:normal;letter-spacing:-0.2px;-webkit-text-stroke-width:0.1px">1,328</div>
<div class="t" style="left:233.75px;width:400px;text-align:center;top:525.8px;height:10px;line-height:10px;font-size:8.2px;color:#111;font-weight:bold;">11</div>
<div class="t" style="left:283.0px;width:200px;text-align:right;top:525.5px;height:10px;line-height:10px;font-size:7.4px;color:#1C1C1C;font-weight:normal;letter-spacing:-0.2px;-webkit-text-stroke-width:0.1px">100,000</div>
<div class="t" style="left:323.5px;width:200px;text-align:right;top:525.5px;height:10px;line-height:10px;font-size:7.4px;color:#1C1C1C;font-weight:normal;letter-spacing:-0.2px;-webkit-text-stroke-width:0.1px">0,113</div>
<div class="t" style="left:364.25px;width:200px;text-align:right;top:525.5px;height:10px;line-height:10px;font-size:7.4px;color:#1C1C1C;font-weight:normal;letter-spacing:-0.2px;-webkit-text-stroke-width:0.1px">0,201</div>
<div class="t" style="left:405.0px;width:200px;text-align:right;top:525.5px;height:10px;line-height:10px;font-size:7.4px;color:#1C1C1C;font-weight:normal;letter-spacing:-0.2px;-webkit-text-stroke-width:0.1px">0,085</div>
<div class="t" style="left:445.0px;width:200px;text-align:right;top:525.5px;height:10px;line-height:10px;font-size:7.4px;color:#1C1C1C;font-weight:normal;letter-spacing:-0.2px;-webkit-text-stroke-width:0.1px">0,151</div>
<div class="t" style="left:486.0px;width:200px;text-align:right;top:525.5px;height:10px;line-height:10px;font-size:7.4px;color:#1C1C1C;font-weight:normal;letter-spacing:-0.2px;-webkit-text-stroke-width:0.1px">-4,615</div>
<div class="t" style="left:526.5px;width:200px;text-align:right;top:525.5px;height:10px;line-height:10px;font-size:7.4px;color:#1C1C1C;font-weight:normal;letter-spacing:-0.2px;-webkit-text-stroke-width:0.1px">0,000</div>
<div class="t" style="left:567.5px;width:200px;text-align:right;top:525.5px;height:10px;line-height:10px;font-size:7.4px;color:#1C1C1C;font-weight:normal;letter-spacing:-0.2px;-webkit-text-stroke-width:0.1px">3,534</div>
<div class="t" style="left:423px;top:541.5px;height:10px;line-height:10px;font-size:6.9px;color:#1A1A1A;font-weight:normal;-webkit-text-stroke-width:0.2px;">Mvano= k1·Presión ·l²</div>
<div class="t" style="left:501px;top:541.5px;height:10px;line-height:10px;font-size:7.0px;color:#1A1A1A;font-weight:normal;-webkit-text-stroke-width:0.2px;">k1 :</div>
<div class="inp" style="left:517px;top:539.5px;width:35px;height:11.5px"></div>
<div class="t" style="left:519px;top:540.55px;height:10px;line-height:10px;font-size:7.0px;color:#1A1A1A;font-weight:normal;-webkit-text-stroke-width:0.2px;">0.07</div>
<div class="t" style="left:566px;top:541.5px;height:10px;line-height:10px;font-size:6.7px;color:#1A1A1A;font-weight:normal;-webkit-text-stroke-width:0.2px;">l = luz entre contrafuertes.</div>
<div class="t" style="left:423px;top:556.0px;height:10px;line-height:10px;font-size:6.9px;color:#1A1A1A;font-weight:normal;-webkit-text-stroke-width:0.2px;">Mapoyo= k2·Presión ·l²</div>
<div class="t" style="left:502px;top:556.0px;height:10px;line-height:10px;font-size:7.0px;color:#1A1A1A;font-weight:normal;-webkit-text-stroke-width:0.2px;">k2 :</div>
<div class="inp" style="left:517px;top:555px;width:35px;height:12px"></div>
<div class="t" style="left:519px;top:556.3px;height:10px;line-height:10px;font-size:7.0px;color:#1A1A1A;font-weight:normal;-webkit-text-stroke-width:0.2px;">0.125</div>
<div class="btn" style="left:723px;top:538px;width:46.5px;height:14px"></div>
<div class="t" style="left:546.25px;width:400px;text-align:center;top:540.2px;height:10px;line-height:10px;font-size:7.0px;color:#1A1A1A;font-weight:normal;-webkit-text-stroke-width:0.2px;">Calcular</div>
<div class="btn" style="left:672.5px;top:554px;width:46.5px;height:14px"></div>
<div class="t" style="left:495.75px;width:400px;text-align:center;top:556.2px;height:10px;line-height:10px;font-size:7.0px;color:#1A1A1A;font-weight:normal;-webkit-text-stroke-width:0.2px;">Ayuda</div>
<div class="btn" style="left:723px;top:554px;width:46.5px;height:14px"></div>
<div class="t" style="left:546.25px;width:400px;text-align:center;top:556.2px;height:10px;line-height:10px;font-size:7.0px;color:#1A1A1A;font-weight:normal;-webkit-text-stroke-width:0.2px;">Salir</div>
<div class="prog" style="left:423px;top:573px;width:346.5px;height:5.5px"></div>
<div class="btn" style="left:423px;top:582px;width:82.5px;height:10.5px"></div>
<div class="t" style="left:246px;width:400px;text-align:center;top:582.3px;height:10px;line-height:10px;font-size:7.0px;color:#1A1A1A;font-weight:normal;-webkit-text-stroke-width:0.2px;">&lt;&lt;</div>
<div class="t" style="left:464px;top:582.3px;height:10px;line-height:10px;font-size:7.0px;color:#1A1A1A;font-weight:normal;-webkit-text-stroke-width:0.2px;">Anterior</div>
<div class="btn" style="left:687.5px;top:582px;width:82.0px;height:10.5px"></div>
<div class="t" style="left:704px;top:582.3px;height:10px;line-height:10px;font-size:7.0px;color:#1A1A1A;font-weight:normal;-webkit-text-stroke-width:0.2px;">Siguiente</div>
<div class="t" style="left:548.5px;width:400px;text-align:center;top:582.3px;height:10px;line-height:10px;font-size:7.0px;color:#1A1A1A;font-weight:normal;-webkit-text-stroke-width:0.2px;">&gt;&gt;</div>
<div style="left:122px;top:440px;width:181px;height:147.5px;background:#0838D8;border-radius:4px 4px 0 0"></div>
<div style="left:122px;top:440px;width:181px;height:18px;background:linear-gradient(#3F90FB 0%,#0E66F0 12%,#0459E8 45%,#0055E5 80%,#0A5DEB 100%);border-radius:4px 4px 0 0;border:1px solid #0838D8;border-bottom:none"></div>
<div class="t" style="left:126.5px;top:445.3px;height:10px;line-height:10px;font-size:8.3px;color:#FFFFFF;font-weight:bold;letter-spacing:-0.25px">Encaje</div>
<div style="left:287.3px;top:443.5px;width:12.5px;height:12.5px;border-radius:2px;border:1px solid #FFFFFF;background:linear-gradient(#E87A55,#D9481E)"></div>
<svg style="left:287.3px;top:443.5px" width="13" height="13"><path d="M3.5 3.5 L9 9 M9 3.5 L3.5 9" stroke="#fff" stroke-width="1.5"/></svg>
<div style="left:124px;top:457.5px;width:177px;height:128px;background:#ECE9D8"></div>
<div class="t" style="left:131px;top:464.8px;height:10px;line-height:10px;font-size:7.0px;color:#1A1A1A;font-weight:normal;-webkit-text-stroke-width:0.2px;">Módulo nº :</div>
<div class="inp" style="left:168px;top:465px;width:18.5px;height:12.5px"></div>
<div class="t" style="left:170px;top:466.55px;height:10px;line-height:10px;font-size:7.2px;color:#1A1A1A;font-weight:normal;-webkit-text-stroke-width:0.2px;">1</div>
<div class="t" style="left:168.5px;top:481.0px;height:10px;line-height:10px;font-size:7.0px;color:#1A1A1A;font-weight:normal;-webkit-text-stroke-width:0.2px;">C.S. deslizamiento :</div>
<div class="inp" style="left:234.5px;top:479.5px;width:29.5px;height:12.0px"></div>
<div class="t" style="left:236.5px;top:480.8px;height:10px;line-height:10px;font-size:7.0px;color:#1A1A1A;font-weight:normal;-webkit-text-stroke-width:0.2px;">1.18637</div>
<div class="t" style="left:168.5px;top:496.5px;height:10px;line-height:10px;font-size:7.0px;color:#1A1A1A;font-weight:normal;-webkit-text-stroke-width:0.2px;">C.S. vuelco :</div>
<div class="inp" style="left:234.5px;top:495px;width:29.5px;height:11.5px"></div>
<div class="t" style="left:236.5px;top:496.05px;height:10px;line-height:10px;font-size:7.0px;color:#1A1A1A;font-weight:normal;-webkit-text-stroke-width:0.2px;">3.10976</div>
<div class="t" style="left:168.5px;top:512.0px;height:10px;line-height:10px;font-size:7.0px;color:#1A1A1A;font-weight:normal;-webkit-text-stroke-width:0.2px;">Tensión máxima :</div>
<div class="inp" style="left:234.5px;top:510px;width:29.5px;height:11.5px"></div>
<div class="t" style="left:236.5px;top:511.04999999999995px;height:10px;line-height:10px;font-size:7.0px;color:#1A1A1A;font-weight:normal;-webkit-text-stroke-width:0.2px;">40.7508</div>
<div class="t" style="left:265.5px;top:513.0px;height:10px;line-height:10px;font-size:7.0px;color:#1A1A1A;font-weight:normal;-webkit-text-stroke-width:0.2px;">T/m2</div>
<div class="t" style="left:168.5px;top:527.5px;height:10px;line-height:10px;font-size:7.0px;color:#1A1A1A;font-weight:normal;-webkit-text-stroke-width:0.2px;">Tensión mínima :</div>
<div class="inp" style="left:234.5px;top:525px;width:29.5px;height:12px"></div>
<div class="t" style="left:236.5px;top:526.3px;height:10px;line-height:10px;font-size:7.0px;color:#1A1A1A;font-weight:normal;-webkit-text-stroke-width:0.2px;">6.52929</div>
<div class="t" style="left:265.5px;top:528.5px;height:10px;line-height:10px;font-size:7.0px;color:#1A1A1A;font-weight:normal;-webkit-text-stroke-width:0.2px;">T/m2</div>
<div class="btn" style="left:130px;top:544px;width:47.5px;height:14.5px"></div>
<div class="t" style="left:-46.25px;width:400px;text-align:center;top:546.45px;height:10px;line-height:10px;font-size:7.0px;color:#1A1A1A;font-weight:normal;-webkit-text-stroke-width:0.2px;">Ayuda</div>
<div class="btn def" style="left:189px;top:544px;width:47.5px;height:14.5px"></div>
<div class="t" style="left:12.75px;width:400px;text-align:center;top:546.45px;height:10px;line-height:10px;font-size:7.0px;color:#1A1A1A;font-weight:normal;-webkit-text-stroke-width:0.2px;">Calcular</div>
<div class="btn" style="left:248.5px;top:544px;width:47.5px;height:14.5px"></div>
<div class="t" style="left:72.25px;width:400px;text-align:center;top:546.45px;height:10px;line-height:10px;font-size:7.0px;color:#1A1A1A;font-weight:normal;-webkit-text-stroke-width:0.2px;">Salir</div>
<div class="prog" style="left:130px;top:560px;width:165.5px;height:5.5px"></div>
<div class="btn" style="left:130px;top:568.5px;width:69.5px;height:10.5px"></div>
<div class="t" style="left:-54px;width:400px;text-align:center;top:569.0px;height:10px;line-height:10px;font-size:7.0px;color:#1A1A1A;font-weight:normal;-webkit-text-stroke-width:0.2px;">&lt;&lt;</div>
<div class="t" style="left:165px;top:569.0px;height:10px;line-height:10px;font-size:7.0px;color:#1A1A1A;font-weight:normal;-webkit-text-stroke-width:0.2px;">Anterior</div>
<div class="btn" style="left:227px;top:568.5px;width:69px;height:10.5px"></div>
<div class="t" style="left:237px;top:569.0px;height:10px;line-height:10px;font-size:7.0px;color:#1A1A1A;font-weight:normal;-webkit-text-stroke-width:0.2px;">Siguiente</div>
<div class="t" style="left:81px;width:400px;text-align:center;top:569.0px;height:10px;line-height:10px;font-size:7.0px;color:#1A1A1A;font-weight:normal;-webkit-text-stroke-width:0.2px;">&gt;&gt;</div>
</div></body></html>
